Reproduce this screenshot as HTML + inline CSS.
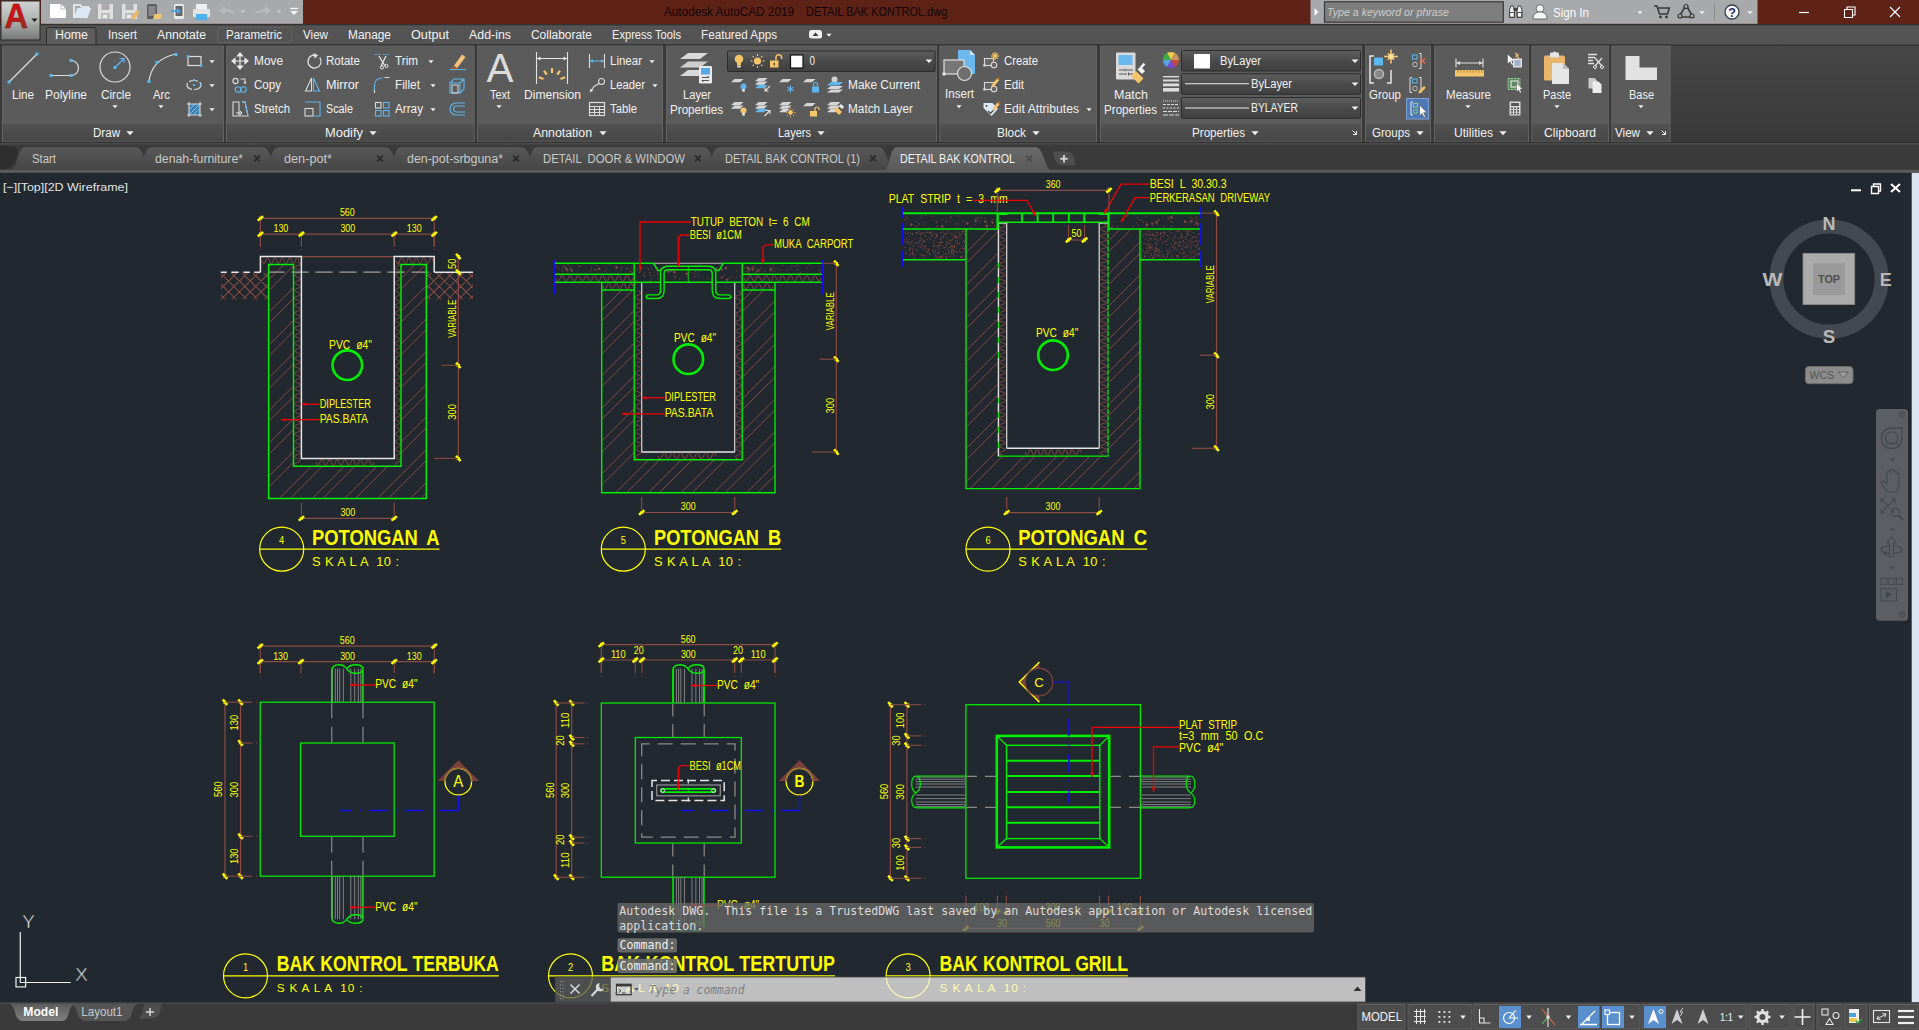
<!DOCTYPE html>
<html lang="en"><head><meta charset="utf-8"><title>Autodesk AutoCAD 2019 - DETAIL BAK KONTROL.dwg</title>
<style>
html,body{margin:0;padding:0;background:#212830;overflow:hidden}
body{width:1919px;height:1030px;position:relative;font-family:"Liberation Sans",sans-serif}
svg{position:absolute;left:0;top:0;display:block}
svg text{white-space:pre}
</style></head><body>
<svg width="1919" height="1030" viewBox="0 0 1919 1030" fill="none" font-family='"Liberation Sans",sans-serif'>
<defs>
<linearGradient id="gAppBtn" x1="0" y1="0" x2="0" y2="1"><stop offset="0" stop-color="#d2d2d2"/><stop offset="0.5" stop-color="#aeb4b0"/><stop offset="1" stop-color="#767676"/></linearGradient>
<linearGradient id="gPanTitle" x1="0" y1="0" x2="0" y2="1"><stop offset="0" stop-color="#515151"/><stop offset="1" stop-color="#474747"/></linearGradient>
<linearGradient id="gCombo" x1="0" y1="0" x2="0" y2="1"><stop offset="0" stop-color="#5f5f5f"/><stop offset="0.5" stop-color="#4a4a4a"/><stop offset="1" stop-color="#404040"/></linearGradient>
<linearGradient id="gRibDark" x1="0" y1="0" x2="0" y2="1"><stop offset="0" stop-color="#474747"/><stop offset="1" stop-color="#383838"/></linearGradient>
<linearGradient id="gModel" x1="0" y1="0" x2="0" y2="1"><stop offset="0" stop-color="#5c5c5c"/><stop offset="1" stop-color="#808080"/></linearGradient>
<linearGradient id="gTab" x1="0" y1="0" x2="0" y2="1"><stop offset="0" stop-color="#585858"/><stop offset="1" stop-color="#464646"/></linearGradient>
<linearGradient id="gTabA" x1="0" y1="0" x2="0" y2="1"><stop offset="0" stop-color="#6a6a6a"/><stop offset="1" stop-color="#5a5a5a"/></linearGradient>
<linearGradient id="gA" x1="0" y1="0" x2="0.3" y2="1"><stop offset="0" stop-color="#d90d12"/><stop offset="0.6" stop-color="#c8141a"/><stop offset="1" stop-color="#8a3423"/></linearGradient>
</defs>
<rect x="0" y="172.6" width="1919" height="830" fill="#212830"/>
<clipPath id="c1"><path d="M268.6 264.5H293.5V466.2H401V264.5H426.3V498.5H268.6Z"/></clipPath><g clip-path="url(#c1)">
<path d="M267 248.75L252.75 263M267 281.5L285.5 263M267 314.25L318.25 263M267 347L351 263M267 379.75L383.75 263M267 412.5L416.5 263M267 445.25L449.25 263M267 478L482 263M267 510.75L514.75 263M267 543.5L547.5 263M267 576.25L580.25 263M267 609L613 263M267 641.75L645.75 263M267 259.55L263.55 263M267 292.3L296.3 263M267 325.05L329.05 263M267 357.8L361.8 263M267 390.55L394.55 263M267 423.3L427.3 263M267 456.05L460.05 263M267 488.8L492.8 263M267 521.55L525.55 263M267 554.3L558.3 263M267 587.05L591.05 263M267 619.8L623.8 263M267 652.55L656.55 263" fill="none" stroke="#8c4b43" stroke-width="0.95"/>
</g>
<clipPath id="c2"><path d="M221 272.6H268.6V299.5H221Z"/></clipPath><g clip-path="url(#c2)">
<path d="M188.5 299.5l26.9 -26.9M199.3 299.5l26.9 -26.9M210.1 299.5l26.9 -26.9M220.9 299.5l26.9 -26.9M231.7 299.5l26.9 -26.9M242.5 299.5l26.9 -26.9M253.3 299.5l26.9 -26.9M264.1 299.5l26.9 -26.9M274.9 299.5l26.9 -26.9M187.8 272.6l26.9 26.9M198.6 272.6l26.9 26.9M209.4 272.6l26.9 26.9M220.2 272.6l26.9 26.9M231 272.6l26.9 26.9M241.8 272.6l26.9 26.9M252.6 272.6l26.9 26.9M263.4 272.6l26.9 26.9M274.2 272.6l26.9 26.9" fill="none" stroke="#8c4b43" stroke-width="1.05"/>
</g>
<clipPath id="c3"><path d="M426.3 272.6H473V299.5H426.3Z"/></clipPath><g clip-path="url(#c3)">
<path d="M393.7 299.5l26.9 -26.9M404.5 299.5l26.9 -26.9M415.3 299.5l26.9 -26.9M426.1 299.5l26.9 -26.9M436.9 299.5l26.9 -26.9M447.7 299.5l26.9 -26.9M458.5 299.5l26.9 -26.9M469.3 299.5l26.9 -26.9M480.1 299.5l26.9 -26.9M393 272.6l26.9 26.9M403.8 272.6l26.9 26.9M414.6 272.6l26.9 26.9M425.4 272.6l26.9 26.9M436.2 272.6l26.9 26.9M447 272.6l26.9 26.9M457.8 272.6l26.9 26.9M468.6 272.6l26.9 26.9M479.4 272.6l26.9 26.9" fill="none" stroke="#8c4b43" stroke-width="1.05"/>
</g>
<path d="M262 260.75q1.85 6.3 3.7 0t3.7 0t3.7 0t3.7 0t3.7 0t3.7 0t3.7 0t3.7 0t3.7 0t3.7 0" fill="none" stroke="#8c4b43" stroke-width="0.9"/>
<path d="M396 260.75q1.85 6.3 3.7 0t3.7 0t3.7 0t3.7 0t3.7 0t3.7 0t3.7 0t3.7 0t3.7 0t3.7 0" fill="none" stroke="#8c4b43" stroke-width="0.9"/>
<path d="M297.5 262q6.2 1.89 0 3.78t0 3.78t0 3.78t0 3.78t0 3.78t0 3.78t0 3.78t0 3.78t0 3.78t0 3.78t0 3.78t0 3.78t0 3.78t0 3.78t0 3.78t0 3.78t0 3.78t0 3.78t0 3.78t0 3.78t0 3.78t0 3.78t0 3.78t0 3.78t0 3.78t0 3.78t0 3.78t0 3.78t0 3.78t0 3.78t0 3.78t0 3.78t0 3.78t0 3.78t0 3.78t0 3.78t0 3.78t0 3.78t0 3.78t0 3.78t0 3.78t0 3.78t0 3.78t0 3.78t0 3.78t0 3.78t0 3.78t0 3.78t0 3.78t0 3.78t0 3.78t0 3.78t0 3.78t0 3.78" fill="none" stroke="#8c4b43" stroke-width="0.9"/>
<path d="M397.6 262q5.2 1.89 0 3.78t0 3.78t0 3.78t0 3.78t0 3.78t0 3.78t0 3.78t0 3.78t0 3.78t0 3.78t0 3.78t0 3.78t0 3.78t0 3.78t0 3.78t0 3.78t0 3.78t0 3.78t0 3.78t0 3.78t0 3.78t0 3.78t0 3.78t0 3.78t0 3.78t0 3.78t0 3.78t0 3.78t0 3.78t0 3.78t0 3.78t0 3.78t0 3.78t0 3.78t0 3.78t0 3.78t0 3.78t0 3.78t0 3.78t0 3.78t0 3.78t0 3.78t0 3.78t0 3.78t0 3.78t0 3.78t0 3.78t0 3.78t0 3.78t0 3.78t0 3.78t0 3.78t0 3.78t0 3.78" fill="none" stroke="#8c4b43" stroke-width="0.9"/>
<path d="M316 462.4q1.93 6 3.87 0t3.87 0t3.87 0t3.87 0t3.87 0t3.87 0t3.87 0t3.87 0t3.87 0t3.87 0t3.87 0t3.87 0t3.87 0t3.87 0t3.87 0" fill="none" stroke="#8c4b43" stroke-width="0.9"/>
<path d="M301.4 256.6L394.2 256.6" stroke="#8c4b43" stroke-width="1.1"/>
<path d="M267.5 272.2L430 272.2" stroke="#a0a0a0" stroke-width="1.3" stroke-dasharray="17 7"/>
<path d="M268.6 264.5H293.5V466.2H401V264.5H426.3V498.5H268.6Z" fill="none" stroke="#00ee00" stroke-width="1.45"/>
<path d="M260.4 272.2V256.5H301.4V458.4H394.2V256.5H434.2V272.2" fill="none" stroke="#e6e6e6" stroke-width="1.5"/>
<path d="M220.8 272.2L260.4 272.2" stroke="#e6e6e6" stroke-width="1.6" stroke-dasharray="6 4.6 7.4 4.6 6.5 4.4 7.5 0"/>
<path d="M434.2 272.2L473 272.2" stroke="#e6e6e6" stroke-width="1.6"/>
<circle cx="347.3" cy="365.2" r="14.8" fill="none" stroke="#00ee00" stroke-width="2.6"/>
<text x="329" y="348.65" font-size="12.99" fill="#ffff00" textLength="43" lengthAdjust="spacingAndGlyphs" word-spacing="4">PVC ø4"</text>
<text x="319.7" y="407.65" font-size="12.99" fill="#ffff00" textLength="51.3" lengthAdjust="spacingAndGlyphs" word-spacing="4">DIPLESTER</text>
<text x="319.7" y="422.65" font-size="12.99" fill="#ffff00" textLength="48.3" lengthAdjust="spacingAndGlyphs" word-spacing="4">PAS.BATA</text>
<path d="M319.7 404.2L301.6 404.2" fill="none" stroke="#f00000" stroke-width="1.3"/>
<path d="M301.6 404.2L306.1 402.5L306.1 405.9Z" fill="#f00000"/>
<path d="M319.7 419.6L281 419.6" fill="none" stroke="#f00000" stroke-width="1.3"/>
<path d="M281 419.6L285.5 417.9L285.5 421.3Z" fill="#f00000"/>
<path d="M260.4 218.4L434.2 218.4" stroke="#8c4b43" stroke-width="1.2"/>
<path d="M260.4 215.4L260.4 246.6" stroke="#8c4b43" stroke-width="1.1"/>
<path d="M257.7 220.6l5.4-4.4" fill="none" stroke="#ffff00" stroke-width="2.5"/>
<path d="M259.2 216.7l2.4 3.4" fill="none" stroke="#ffff00" stroke-width="0.9"/>
<path d="M434.2 215.4L434.2 246.6" stroke="#8c4b43" stroke-width="1.1"/>
<path d="M431.5 220.6l5.4-4.4" fill="none" stroke="#ffff00" stroke-width="2.5"/>
<path d="M433 216.7l2.4 3.4" fill="none" stroke="#ffff00" stroke-width="0.9"/>
<text x="339.9" y="216.2" font-size="10.06" fill="#ffff00" textLength="14.8" lengthAdjust="spacingAndGlyphs">560</text>
<path d="M260.4 234.2L434.2 234.2" stroke="#8c4b43" stroke-width="1.2"/>
<path d="M260.4 231.2L260.4 246.6" stroke="#8c4b43" stroke-width="1.1"/>
<path d="M257.7 236.4l5.4-4.4" fill="none" stroke="#ffff00" stroke-width="2.5"/>
<path d="M259.2 232.5l2.4 3.4" fill="none" stroke="#ffff00" stroke-width="0.9"/>
<path d="M301.4 231.2L301.4 246.6" stroke="#8c4b43" stroke-width="1.1"/>
<path d="M298.7 236.4l5.4-4.4" fill="none" stroke="#ffff00" stroke-width="2.5"/>
<path d="M300.2 232.5l2.4 3.4" fill="none" stroke="#ffff00" stroke-width="0.9"/>
<path d="M394.2 231.2L394.2 246.6" stroke="#8c4b43" stroke-width="1.1"/>
<path d="M391.5 236.4l5.4-4.4" fill="none" stroke="#ffff00" stroke-width="2.5"/>
<path d="M393 232.5l2.4 3.4" fill="none" stroke="#ffff00" stroke-width="0.9"/>
<path d="M434.2 231.2L434.2 246.6" stroke="#8c4b43" stroke-width="1.1"/>
<path d="M431.5 236.4l5.4-4.4" fill="none" stroke="#ffff00" stroke-width="2.5"/>
<path d="M433 232.5l2.4 3.4" fill="none" stroke="#ffff00" stroke-width="0.9"/>
<text x="273.5" y="232" font-size="10.06" fill="#ffff00" textLength="14.8" lengthAdjust="spacingAndGlyphs">130</text>
<text x="340.4" y="232" font-size="10.06" fill="#ffff00" textLength="14.8" lengthAdjust="spacingAndGlyphs">300</text>
<text x="406.8" y="232" font-size="10.06" fill="#ffff00" textLength="14.8" lengthAdjust="spacingAndGlyphs">130</text>
<rect x="259.9" y="249" width="1" height="1" fill="#8c4b43"/>
<rect x="300.9" y="249" width="1" height="1" fill="#8c4b43"/>
<rect x="393.7" y="249" width="1" height="1" fill="#8c4b43"/>
<rect x="433.7" y="249" width="1" height="1" fill="#8c4b43"/>
<path d="M458.3 256.4L458.3 458.4" stroke="#8c4b43" stroke-width="1.2"/>
<path d="M456.1 253.7l4.4 5.4" fill="none" stroke="#ffff00" stroke-width="2.5"/>
<path d="M456.6 257.6l3.4-2.4" fill="none" stroke="#ffff00" stroke-width="0.9"/>
<path d="M456.1 269.5l4.4 5.4" fill="none" stroke="#ffff00" stroke-width="2.5"/>
<path d="M456.6 273.4l3.4-2.4" fill="none" stroke="#ffff00" stroke-width="0.9"/>
<path d="M456.1 362.6l4.4 5.4" fill="none" stroke="#ffff00" stroke-width="2.5"/>
<path d="M456.6 366.5l3.4-2.4" fill="none" stroke="#ffff00" stroke-width="0.9"/>
<path d="M456.1 455.7l4.4 5.4" fill="none" stroke="#ffff00" stroke-width="2.5"/>
<path d="M456.6 459.6l3.4-2.4" fill="none" stroke="#ffff00" stroke-width="0.9"/>
<text x="0" y="0" font-size="10.06" fill="#ffff00" textLength="38" lengthAdjust="spacingAndGlyphs" transform="translate(455.8 337.75) rotate(-90)">VARIABLE</text>
<text x="0" y="0" font-size="10.06" fill="#ffff00" textLength="15.7" lengthAdjust="spacingAndGlyphs" transform="translate(455.8 419.7) rotate(-90)">300</text>
<text x="0" y="0" font-size="10.06" fill="#ffff00" textLength="10.5" lengthAdjust="spacingAndGlyphs" transform="translate(456.2 269.05) rotate(-90)">50</text>
<path d="M441.7 365.3L458 365.3" stroke="#8c4b43" stroke-width="1.1"/>
<path d="M434 458.4L458 458.4" stroke="#8c4b43" stroke-width="1.1"/>
<path d="M301.4 518.4L394.2 518.4" stroke="#8c4b43" stroke-width="1.2"/>
<path d="M301.4 503L301.4 515.4" stroke="#8c4b43" stroke-width="1.1"/>
<path d="M298.7 520.6l5.4-4.4" fill="none" stroke="#ffff00" stroke-width="2.5"/>
<path d="M300.2 516.7l2.4 3.4" fill="none" stroke="#ffff00" stroke-width="0.9"/>
<path d="M394.2 503L394.2 515.4" stroke="#8c4b43" stroke-width="1.1"/>
<path d="M391.5 520.6l5.4-4.4" fill="none" stroke="#ffff00" stroke-width="2.5"/>
<path d="M393 516.7l2.4 3.4" fill="none" stroke="#ffff00" stroke-width="0.9"/>
<text x="340.4" y="516.2" font-size="10.06" fill="#ffff00" textLength="14.8" lengthAdjust="spacingAndGlyphs">300</text>
<circle cx="281.7" cy="549.2" r="22" fill="none" stroke="#ffff00" stroke-width="1.2"/>
<path d="M259.7 549.2L439.5 549.2" stroke="#ffff00" stroke-width="1.3"/>
<text x="279.1" y="544.4" font-size="10.61" fill="#ffff00" textLength="5.2" lengthAdjust="spacingAndGlyphs">4</text>
<text x="312" y="544.8" font-size="22.63" fill="#ffff00" textLength="127.5" lengthAdjust="spacingAndGlyphs" font-weight="bold" word-spacing="5">POTONGAN A</text>
<text x="312" y="566" font-size="12.85" fill="#ffff00" textLength="87" lengthAdjust="spacing" xml:space="preserve">S K A L A  10 :</text>
<clipPath id="c4"><path d="M601.7 290H634.2V459.7H742.2V290H775V492.2H601.7Z"/></clipPath><g clip-path="url(#c4)">
<path d="M600 279.15L591.15 288M600 311.9L623.9 288M600 344.65L656.65 288M600 377.4L689.4 288M600 410.15L722.15 288M600 442.9L754.9 288M600 475.65L787.65 288M600 508.4L820.4 288M600 541.15L853.15 288M600 573.9L885.9 288M600 606.65L918.65 288M600 639.4L951.4 288M600 257.4L569.4 288M600 290.15L602.15 288M600 322.9L634.9 288M600 355.65L667.65 288M600 388.4L700.4 288M600 421.15L733.15 288M600 453.9L765.9 288M600 486.65L798.65 288M600 519.4L831.4 288M600 552.15L864.15 288M600 584.9L896.9 288M600 617.65L929.65 288M600 650.4L962.4 288" fill="none" stroke="#8c4b43" stroke-width="0.95"/>
</g>
<path d="M590.56 269.23h1M627.13 268.47h1M594.86 269.46h1M569.81 268.85h1M604.32 271.12h1M562.79 267.16h1M562.53 271.26h1M609.24 265.04h1M631.62 272.51h1M606.18 269.69h1M567.71 264.82h1M596.45 265.18h1M570.24 266.66h1M557.83 268.46h1M589.64 271.52h1M595.73 269.89h1M594.23 270.07h1M590.94 266.95h1M632.82 272.77h1M620.62 270.43h1M579.93 266.56h1M577.9 265.27h1M614.89 267.94h1M621.11 267.83h1M629.75 271.56h1M555.54 266.4h1M626.05 268.51h1M631.48 267.92h1M561.16 269.8h1M615.83 266.89h1M562.25 267.39h1M630.22 270.84h1M564.64 266.7h1M563.33 265.19h1" fill="none" stroke="#8c4b43" stroke-width="1"/>
<path d="M615.88 266.48l2 .6-1.2 1.6zM598.17 267.96l2 .6-1.2 1.6zM570.71 269.53l2 .6-1.2 1.6zM566.26 269.04l2 .6-1.2 1.6zM565.18 267.81l2 .6-1.2 1.6z" fill="#8c4b43" stroke="#8c4b43" stroke-width="0.8"/>
<path d="M780.02 270.03h1M794.98 265.86h1M743.85 267.74h1M764.38 271.26h1M796.87 269.57h1M786.54 270.06h1M754.33 268.26h1M755.66 272.04h1M747.59 271.33h1M748.82 270.26h1M769.29 267.98h1M808.71 264.85h1M747.74 272.11h1M782.7 265.44h1M820 272.37h1M751.78 268.13h1M753.54 267.23h1M791.47 266.02h1M797.35 265.12h1M756.35 271.31h1M774.24 268.09h1M789.49 268.56h1M773 264.95h1M799.65 272.54h1M819.15 270.08h1M770.79 267.64h1M796.83 270.16h1M751.88 266.6h1M771.34 268.84h1M806.19 268.75h1M745.2 271.36h1M776.55 268.9h1M760.33 268.16h1M773.28 270.95h1" fill="none" stroke="#8c4b43" stroke-width="1"/>
<path d="M751.7 268.52l2 .6-1.2 1.6zM757.35 269.33l2 .6-1.2 1.6zM746.76 267.02l2 .6-1.2 1.6zM769.81 269l2 .6-1.2 1.6zM747.9 268.03l2 .6-1.2 1.6z" fill="#8c4b43" stroke="#8c4b43" stroke-width="0.8"/>
<path d="M662.83 275.73h1M707.67 278.37h1M655.09 268.41h1M651.03 268.33h1M712.94 266.8h1M691.55 268.14h1M666.59 271.65h1M723.87 274.5h1M637.02 269.14h1M650.98 278.73h1M720.93 277.68h1M722.68 276.69h1M735.65 277.48h1M662.58 278.38h1M686.86 276.86h1M695.02 271.62h1M673.92 271.62h1M668.6 266.59h1M721.97 277.55h1M739.49 275.82h1M693.97 276.75h1M649.73 275.6h1M682.28 267.54h1M656.88 273.12h1M662.22 272.1h1M699.38 271.07h1M649.3 272.6h1M660.34 268.49h1M656.02 270.6h1M643.23 275.18h1M736.11 270.97h1M711.34 279.72h1M640.06 266.98h1M720.54 278.19h1M702.92 267.27h1M679.12 278.68h1M728.99 277.63h1M656.92 278.44h1M675.04 276.24h1M649.95 280.34h1M699.17 276.34h1M657.84 274.64h1M696.78 274.22h1M673.41 276.42h1M671.51 269.45h1M652.85 275.71h1M647.34 268.33h1M642.79 275.06h1M694.17 273.45h1M639.6 271.78h1M671.69 266.19h1M635.81 280.77h1M648.32 269.55h1M663.87 274.32h1M643.67 272.27h1M674.19 278.14h1M636.1 270.09h1M687.89 280.31h1M690.01 272.33h1M706.13 269.47h1M638.85 272.77h1M731.55 276.59h1M662.75 275.71h1M725.08 268.86h1M697.54 270.42h1M661.27 269.33h1M657.01 270.35h1M639.52 271.1h1M644.65 276.91h1M698.78 264.77h1" fill="none" stroke="#8c4b43" stroke-width="1"/>
<path d="M715.82 268.07l2 .6-1.2 1.6zM685.78 272.99l2 .6-1.2 1.6zM670.62 269.41l2 .6-1.2 1.6zM681.08 267.35l2 .6-1.2 1.6zM725.02 267.01l2 .6-1.2 1.6zM720.91 268.45l2 .6-1.2 1.6zM667.59 270.74l2 .6-1.2 1.6zM639.92 267.23l2 .6-1.2 1.6zM673.51 271.47l2 .6-1.2 1.6zM726.34 278.86l2 .6-1.2 1.6z" fill="#8c4b43" stroke="#8c4b43" stroke-width="0.8"/>
<path d="M556 278.3q2.03 6.2 4.05 0t4.05 0t4.05 0t4.05 0t4.05 0t4.05 0t4.05 0t4.05 0t4.05 0t4.05 0t4.05 0t4.05 0t4.05 0t4.05 0t4.05 0t4.05 0t4.05 0t4.05 0t4.05 0" fill="none" stroke="#8c4b43" stroke-width="0.9"/>
<path d="M744 278.3q2.03 6.2 4.05 0t4.05 0t4.05 0t4.05 0t4.05 0t4.05 0t4.05 0t4.05 0t4.05 0t4.05 0t4.05 0t4.05 0t4.05 0t4.05 0t4.05 0t4.05 0t4.05 0t4.05 0t4.05 0" fill="none" stroke="#8c4b43" stroke-width="0.9"/>
<path d="M603 286.2q1.88 6 3.75 0t3.75 0t3.75 0t3.75 0t3.75 0t3.75 0t3.75 0t3.75 0" fill="none" stroke="#8c4b43" stroke-width="0.9"/>
<path d="M744 286.2q2.07 6 4.14 0t4.14 0t4.14 0t4.14 0t4.14 0t4.14 0t4.14 0" fill="none" stroke="#8c4b43" stroke-width="0.9"/>
<path d="M641.7 283V452M734.7 452V283" fill="none" stroke="#d0d0d0" stroke-width="1.25"/>
<path d="M641.7 452L734.7 452" stroke="#e6e6e6" stroke-width="1.5"/>
<path d="M653.3 263.3L723 263.3" stroke="#bdbdbd" stroke-width="1.1"/>
<path d="M638.1 291q5.8 2.1 0 4.2t0 4.2t0 4.2t0 4.2t0 4.2t0 4.2t0 4.2t0 4.2t0 4.2t0 4.2t0 4.2t0 4.2t0 4.2t0 4.2t0 4.2t0 4.2t0 4.2t0 4.2t0 4.2t0 4.2t0 4.2t0 4.2t0 4.2t0 4.2t0 4.2t0 4.2t0 4.2t0 4.2t0 4.2t0 4.2t0 4.2t0 4.2t0 4.2t0 4.2t0 4.2t0 4.2t0 4.2t0 4.2t0 4.2t0 4.2" fill="none" stroke="#8c4b43" stroke-width="0.9"/>
<path d="M738.45 291q5.9 2.1 0 4.2t0 4.2t0 4.2t0 4.2t0 4.2t0 4.2t0 4.2t0 4.2t0 4.2t0 4.2t0 4.2t0 4.2t0 4.2t0 4.2t0 4.2t0 4.2t0 4.2t0 4.2t0 4.2t0 4.2t0 4.2t0 4.2t0 4.2t0 4.2t0 4.2t0 4.2t0 4.2t0 4.2t0 4.2t0 4.2t0 4.2t0 4.2t0 4.2t0 4.2t0 4.2t0 4.2t0 4.2t0 4.2t0 4.2t0 4.2" fill="none" stroke="#8c4b43" stroke-width="0.9"/>
<path d="M658 455.95q2.07 5.9 4.14 0t4.14 0t4.14 0t4.14 0t4.14 0t4.14 0t4.14 0t4.14 0t4.14 0t4.14 0t4.14 0t4.14 0t4.14 0t4.14 0" fill="none" stroke="#8c4b43" stroke-width="0.9"/>
<path d="M554.2 263.3H653.3L658.3 270.6H662M715 270.6H719L723 263.3H822.5" fill="none" stroke="#00ee00" stroke-width="1.5"/>
<path d="M554.2 274.2H634.2M742.2 274.2H822.5M554.2 282.2H742.2M742.2 282.2H822.5M601.7 290H634.2M742.2 290H775" fill="none" stroke="#00ee00" stroke-width="1.4"/>
<path d="M634.2 263.3V459.7H742.2V263.3" fill="none" stroke="#00ee00" stroke-width="1.4"/>
<path d="M601.7 282.2V492.7H775V282.2" fill="none" stroke="#00ee00" stroke-width="1.4"/>
<path d="M648 296.7H656.5Q662.3 296.7 662.3 290.5V273.5Q662.3 268 668 268H708.5Q714 268 714 273.5V290.5Q714 296.7 720 296.7H728.7" fill="none" stroke="#00ee00" stroke-width="5" stroke-linecap="round"/>
<path d="M648 296.7H656.5Q662.3 296.7 662.3 290.5V273.5Q662.3 268 668 268H708.5Q714 268 714 273.5V290.5Q714 296.7 720 296.7H728.7" fill="none" stroke="#212830" stroke-width="2.2" stroke-linecap="round"/>
<path d="M688.3 266L688.3 283" stroke="#00ee00" stroke-width="0.8"/>
<path d="M554.2 260L554.2 294.5" stroke="#1010f0" stroke-width="1.6"/>
<path d="M822.5 260L822.5 294.5" stroke="#1010f0" stroke-width="1.6"/>
<circle cx="688.3" cy="359.2" r="14.8" fill="none" stroke="#00ee00" stroke-width="2.6"/>
<text x="674" y="342.15" font-size="12.99" fill="#ffff00" textLength="42" lengthAdjust="spacingAndGlyphs" word-spacing="4">PVC ø4"</text>
<text x="664.7" y="401.35" font-size="12.99" fill="#ffff00" textLength="51.1" lengthAdjust="spacingAndGlyphs" word-spacing="4">DIPLESTER</text>
<text x="664.7" y="417.45" font-size="12.99" fill="#ffff00" textLength="48.6" lengthAdjust="spacingAndGlyphs" word-spacing="4">PAS.BATA</text>
<path d="M664.7 397.8L641.9 397.8" fill="none" stroke="#f00000" stroke-width="1.3"/>
<path d="M641.9 397.8L646.4 396.1L646.4 399.5Z" fill="#f00000"/>
<path d="M664.7 413.8L621.7 413.8" fill="none" stroke="#f00000" stroke-width="1.3"/>
<path d="M621.7 413.8L626.2 412.1L626.2 415.5Z" fill="#f00000"/>
<text x="690.8" y="225.95" font-size="12.99" fill="#ffff00" textLength="118.9" lengthAdjust="spacingAndGlyphs" word-spacing="4">TUTUP BETON t= 6 CM</text>
<text x="689.7" y="239.15" font-size="12.99" fill="#ffff00" textLength="52" lengthAdjust="spacingAndGlyphs" word-spacing="4">BESI ø1CM</text>
<text x="774" y="248.35" font-size="12.99" fill="#ffff00" textLength="79.3" lengthAdjust="spacingAndGlyphs" word-spacing="4">MUKA CARPORT</text>
<path d="M690.8 222L640 222L640 270" fill="none" stroke="#f00000" stroke-width="1.3"/>
<path d="M640 270L638.3 265.5L641.7 265.5Z" fill="#f00000"/>
<path d="M689.7 235L681 235L678.3 237.5L678.3 266.5" fill="none" stroke="#f00000" stroke-width="1.3"/>
<path d="M678.3 266.5L676.6 262L680 262Z" fill="#f00000"/>
<path d="M774 244.8L765.5 244.8L763 247L763 263.5" fill="none" stroke="#f00000" stroke-width="1.3"/>
<path d="M763 263.5L761.3 259L764.7 259Z" fill="#f00000"/>
<path d="M836.3 263.3L836.3 452" stroke="#8c4b43" stroke-width="1.2"/>
<path d="M834.1 260.6l4.4 5.4" fill="none" stroke="#ffff00" stroke-width="2.5"/>
<path d="M834.6 264.5l3.4-2.4" fill="none" stroke="#ffff00" stroke-width="0.9"/>
<path d="M834.1 356.5l4.4 5.4" fill="none" stroke="#ffff00" stroke-width="2.5"/>
<path d="M834.6 360.4l3.4-2.4" fill="none" stroke="#ffff00" stroke-width="0.9"/>
<path d="M834.1 449.3l4.4 5.4" fill="none" stroke="#ffff00" stroke-width="2.5"/>
<path d="M834.6 453.2l3.4-2.4" fill="none" stroke="#ffff00" stroke-width="0.9"/>
<text x="0" y="0" font-size="10.06" fill="#ffff00" textLength="38" lengthAdjust="spacingAndGlyphs" transform="translate(833.6 330.25) rotate(-90)">VARIABLE</text>
<text x="0" y="0" font-size="10.06" fill="#ffff00" textLength="15.7" lengthAdjust="spacingAndGlyphs" transform="translate(833.6 413.45) rotate(-90)">300</text>
<path d="M822.5 263.3L836 263.3" stroke="#8c4b43" stroke-width="1.1"/>
<path d="M819.5 359.2L836 359.2" stroke="#8c4b43" stroke-width="1.1"/>
<path d="M812 452L836 452" stroke="#8c4b43" stroke-width="1.1"/>
<path d="M641.7 512.5L734.7 512.5" stroke="#8c4b43" stroke-width="1.2"/>
<path d="M641.7 497L641.7 509.5" stroke="#8c4b43" stroke-width="1.1"/>
<path d="M639 514.7l5.4-4.4" fill="none" stroke="#ffff00" stroke-width="2.5"/>
<path d="M640.5 510.8l2.4 3.4" fill="none" stroke="#ffff00" stroke-width="0.9"/>
<path d="M734.7 497L734.7 509.5" stroke="#8c4b43" stroke-width="1.1"/>
<path d="M732 514.7l5.4-4.4" fill="none" stroke="#ffff00" stroke-width="2.5"/>
<path d="M733.5 510.8l2.4 3.4" fill="none" stroke="#ffff00" stroke-width="0.9"/>
<text x="680.8" y="510.3" font-size="10.06" fill="#ffff00" textLength="14.8" lengthAdjust="spacingAndGlyphs">300</text>
<circle cx="623.3" cy="549.2" r="22" fill="none" stroke="#ffff00" stroke-width="1.2"/>
<path d="M601.3 549.2L781.3 549.2" stroke="#ffff00" stroke-width="1.3"/>
<text x="620.7" y="544.4" font-size="10.61" fill="#ffff00" textLength="5.2" lengthAdjust="spacingAndGlyphs">5</text>
<text x="654" y="544.8" font-size="22.63" fill="#ffff00" textLength="127.3" lengthAdjust="spacingAndGlyphs" font-weight="bold" word-spacing="5">POTONGAN B</text>
<text x="654" y="566" font-size="12.85" fill="#ffff00" textLength="87" lengthAdjust="spacing" xml:space="preserve">S K A L A  10 :</text>
<clipPath id="c5"><path d="M966 228.9H998V456.2H1108V228.9H1140V488.6H966Z"/></clipPath><g clip-path="url(#c5)">
<path d="M964 221.75L958.75 227M964 254.5L991.5 227M964 287.25L1024.25 227M964 320L1057 227M964 352.75L1089.75 227M964 385.5L1122.5 227M964 418.25L1155.25 227M964 451L1188 227M964 483.75L1220.75 227M964 516.5L1253.5 227M964 549.25L1286.25 227M964 582L1319 227M964 614.75L1351.75 227M964 647.5L1384.5 227M964 199.95L936.95 227M964 232.7L969.7 227M964 265.45L1002.45 227M964 298.2L1035.2 227M964 330.95L1067.95 227M964 363.7L1100.7 227M964 396.45L1133.45 227M964 429.2L1166.2 227M964 461.95L1198.95 227M964 494.7L1231.7 227M964 527.45L1264.45 227M964 560.2L1297.2 227M964 592.95L1329.95 227M964 625.7L1362.7 227M964 658.45L1395.45 227" fill="none" stroke="#8c4b43" stroke-width="0.95"/>
</g>
<path d="M918.92 223.55h1M962.87 221h1M923.7 224.79h1M979.03 221.4h1M950.73 218.06h1M903.8 219.69h1M958.23 216.04h1M977.72 218.01h1M925.26 215.71h1M996.77 224.14h1M985.32 222.65h1M906.69 219.18h1M950.02 216.6h1M992.51 219.66h1M917.98 225.09h1M915.18 226.43h1M945.87 221.88h1M935.56 221.06h1M920.98 215.65h1M984.46 218.04h1M976.45 217.72h1M994.08 226.02h1M974.07 224.43h1M957.8 224.03h1M914.95 220.96h1M980.83 217.63h1M989.82 225.94h1M941.8 219.62h1M945.7 219.87h1M996.52 219.88h1M906.01 216.33h1M970.64 227.21h1M949.88 221.15h1M954.97 224.25h1M924.26 222.57h1M955.53 222.73h1M920.39 217.26h1M936.06 226.42h1M935.91 222.43h1M932.17 216.45h1" fill="none" stroke="#8c4b43" stroke-width="1"/>
<path d="M910.44 223.73l2 .6-1.2 1.6zM974.82 219.56l2 .6-1.2 1.6zM966.34 222.42l2 .6-1.2 1.6zM985.83 225.1l2 .6-1.2 1.6zM941.33 225.4l2 .6-1.2 1.6zM991.51 221.61l2 .6-1.2 1.6zM984.43 220.66l2 .6-1.2 1.6z" fill="#8c4b43" stroke="#8c4b43" stroke-width="0.8"/>
<path d="M1195.72 216.9h1M1111.14 227.28h1M1125.67 216.66h1M1167.95 219.38h1M1189.5 218h1M1195.83 219.07h1M1163.4 226.48h1M1171.02 226.38h1M1173.08 215.79h1M1188.76 222.33h1M1137.12 217.5h1M1185.91 222.25h1M1193.89 224.56h1M1195.99 222.05h1M1172.2 222.61h1M1132.39 226.78h1M1137.28 224.65h1M1195.39 223.08h1M1121.87 225.19h1M1169.41 217.44h1M1113.45 221.63h1M1111.92 226.39h1M1154.82 221.46h1M1146.05 223.2h1M1191.94 218.92h1M1142.83 222.25h1M1135.91 222.41h1M1158.15 220.45h1M1169.93 221.59h1M1116.97 227.26h1M1141.19 220.42h1M1145.45 226.45h1M1195.17 221.4h1M1145.26 216.37h1M1190.04 217.27h1M1158.47 219.42h1M1138.71 219.52h1M1126.31 215.65h1M1157.46 224.83h1M1167.56 217.64h1" fill="none" stroke="#8c4b43" stroke-width="1"/>
<path d="M1170.69 216.49l2 .6-1.2 1.6zM1145.94 223.87l2 .6-1.2 1.6zM1190.59 220.38l2 .6-1.2 1.6zM1184.07 220.74l2 .6-1.2 1.6zM1155.85 221.55l2 .6-1.2 1.6zM1196.74 223.06l2 .6-1.2 1.6zM1151.39 222.91l2 .6-1.2 1.6z" fill="#8c4b43" stroke="#8c4b43" stroke-width="0.8"/>
<path d="M960.38 256.88h1M958.38 233.01h1M939.91 242.4h1M936.1 234.3h1M915.31 242.97h1M917.09 243.26h1M905.02 233.07h1M947.17 242.33h1M935.03 250.96h1M925.58 232.29h1M951.66 246.96h1M943.96 247.84h1M963.2 240.71h1M950.23 240.88h1M938.68 248.93h1M922.84 233.07h1M932.66 250.51h1M939.82 243.05h1M943.01 235.72h1M914.48 239.63h1M953.68 236.1h1M910.53 233.42h1M905.89 238.31h1M938.73 253.35h1M923.84 240.9h1M921.24 239.11h1M951.32 245.85h1M919.39 233.66h1M951.7 250.22h1M954.46 237.27h1M937.05 256.06h1M939.95 256.79h1M913.79 257.61h1M906.94 242.19h1M904.94 253.04h1M945.76 257.58h1M953.01 256.89h1M936.62 257.97h1M949.56 240.25h1M963.43 241.11h1M915.39 232.79h1M932.16 236.13h1M960.92 256.93h1M916.78 233.56h1M936.03 235.38h1M936.93 253.13h1M919.06 242.34h1M958.9 242.97h1M924.58 255.33h1M953.55 255.41h1M945.8 242.09h1M946.12 253.6h1M942.83 237.28h1M921.66 242.01h1M950.96 246.08h1M937.32 253.51h1M910.17 248.12h1M923.95 246.14h1M954.87 237.55h1M962.02 232.87h1M938.06 245.65h1M917.96 246.18h1M932.45 243.11h1M947.68 230.81h1M926.7 252.38h1M912.22 254.64h1M916.02 249.5h1M914.15 243.1h1M929.49 232.96h1M946.53 243.95h1M945.87 245.58h1M937.69 245.22h1M921.81 255.51h1M908.81 254.89h1M956.6 244.44h1M951.28 249.28h1M940.71 238.75h1M923.16 240.34h1M922.08 257.19h1M924.49 241.4h1M929.3 253.24h1M932.88 245.98h1M919.21 238.37h1M908.98 236.7h1M919.73 254.22h1M934.4 233.75h1M931.96 234.04h1M938.31 242.9h1M956.28 237.86h1M955.83 237.53h1M963.93 248.2h1M906.12 252.98h1M920.45 240.7h1M912.51 253.81h1M909.06 251.08h1M927.84 249.45h1M921.52 232.86h1M959.78 248.77h1M913.94 257.64h1M959.58 235.74h1M904.67 247.56h1M912.06 250.9h1M932.34 250.27h1M938.54 251.97h1M954.03 247.34h1M939.87 239.72h1M911.75 233.25h1M956.2 236.39h1M929.73 239.44h1M941.61 245.42h1M956.33 242.73h1M925.76 248.67h1M949.31 256.24h1M922.68 255.17h1M963.86 257.81h1M911.45 241.19h1M951.1 253.64h1M905.93 241.6h1M948.04 251.63h1M936.41 236.51h1M928.52 232.32h1M922.91 242.5h1M954.11 246.97h1M928.98 237.49h1M922.89 249.21h1M930.9 235.48h1M954.04 246.59h1M963 245.5h1M941.82 242.5h1M940.91 256.06h1M963.85 248.94h1M929.96 232.43h1M955.17 241.5h1M927.02 232.28h1M905.6 241.48h1M963.45 251.14h1M947.09 249.15h1M920.28 235.35h1M940.54 232.45h1M939.67 244.9h1M936.86 234.05h1M907.66 243.76h1M912.45 248.4h1M922.54 247.83h1M949.64 247.44h1M936.19 236.15h1M924.85 257.69h1M920.02 238.55h1M933.84 245.77h1M952.13 238.85h1M962.71 231.31h1M952.11 246.42h1M958.92 234.92h1M945.89 256.84h1M944.52 233.8h1M960.14 257.46h1M910.31 253.53h1M908.38 232.94h1M952.42 250.57h1M962.37 248.14h1M934.97 238.21h1M938.73 258.09h1M943.27 254.87h1M915.64 250.99h1M948.5 232.66h1M953.94 235.56h1M916.87 232.39h1M944.25 234.63h1M963.51 230.7h1M953.28 251.65h1M938.51 246.49h1M952.58 248.26h1M912.07 252.69h1M925.26 246.81h1M935.01 255.65h1M928.98 254.25h1M908.53 239.7h1M944.74 247.59h1M954.69 236.44h1M952.96 252.66h1M912.29 234.56h1M939.37 257.63h1M941.24 242.51h1M934.67 253.04h1M935.62 245.51h1M939.99 256.43h1M952.72 253.86h1M919.87 247.26h1M954.12 250.52h1M962.04 255.96h1M911.35 244.73h1M925.5 236.36h1M934.3 257.85h1M950.75 233.44h1M918.74 240.9h1M957.94 243.38h1M913.31 245.89h1M918.7 231.76h1M939.95 258.05h1M951.22 251.02h1M912.89 246.2h1M942.67 251.65h1M930.97 232.17h1M960.55 238.03h1M948.91 243.51h1M951.42 240.02h1M909.19 242.51h1M933.02 252.57h1M928.33 249.09h1M926.64 250.92h1M914.21 254.99h1M961.58 231.35h1M956.29 252.17h1M946.12 233.62h1M948.57 252h1M942.02 257.3h1M961.74 248.19h1M960.39 234.67h1M921.85 245.32h1M935.64 257h1M942.61 247.85h1M941.71 256.8h1M928.13 251.11h1M940.41 241.81h1M924.35 234.94h1M904.17 239.97h1M921.96 232.94h1M933.36 240.38h1M960.45 252.24h1M944.4 254.08h1M920.39 233.91h1M941 236.98h1M964.08 242.43h1M958 237.48h1M909.26 248.01h1M946.11 237.77h1M960.5 257.56h1M945.77 257.79h1M963.96 234.79h1M948.42 251.29h1M948.51 240.07h1M936.91 246.93h1M955.77 232.12h1M926.58 239.39h1M952.18 233.92h1M907.29 233.89h1M910.64 242.71h1M956.74 240.5h1M909.72 249.19h1M923.96 246.46h1M949.48 243.28h1M948.6 247.8h1M955.88 251.74h1M958.92 251.3h1M920.86 244.63h1M950.99 252.36h1M948.42 253.97h1M954.21 245.63h1M942.89 231.91h1M932.86 250.76h1" fill="none" stroke="#8c4b43" stroke-width="1"/>
<path d="M1182.67 253.88h1M1151.68 258.25h1M1152.35 249.22h1M1146.37 251.61h1M1149.85 250.2h1M1183.38 251.84h1M1166.82 254.6h1M1198.79 233.89h1M1171.24 257.15h1M1184.24 242.96h1M1158.82 257h1M1145.98 251.69h1M1190.33 235.05h1M1160.12 239.13h1M1172.71 240.83h1M1193.28 256.22h1M1159.5 255.4h1M1145.07 233.37h1M1179.91 252.75h1M1188.92 258.08h1M1191.29 238.05h1M1184.45 256.22h1M1146.48 244.35h1M1150.03 234.65h1M1169.05 249.2h1M1197.96 234.33h1M1170.57 258.23h1M1185.75 245.39h1M1155.19 248.11h1M1156.27 248.47h1M1178.95 241.5h1M1187.49 241.84h1M1168.43 253.65h1M1155.66 235.82h1M1174.6 242.69h1M1192.14 237.57h1M1162.72 232.29h1M1167.38 239.33h1M1167.25 251.79h1M1143.19 258h1M1182.62 253.09h1M1172.52 246.61h1M1164.96 241.63h1M1153.92 239.06h1M1158.19 239.98h1M1194.07 252.74h1M1178.51 231.17h1M1156.35 245.69h1M1181.49 242.27h1M1178.01 255.68h1M1156.65 241.24h1M1185.47 239.49h1M1183.2 241.66h1M1142.13 243.47h1M1144.98 252.36h1M1190.43 245.32h1M1193.61 236.58h1M1167.07 235.55h1M1143.85 253.46h1M1144.05 256.49h1M1173.57 250.04h1M1143.9 255.74h1M1187.44 233.57h1M1151.7 234.59h1M1170.49 232.87h1M1187.71 244.4h1M1182.19 237.73h1M1179.26 243.22h1M1178.93 242.04h1M1198.9 254.06h1M1189.71 240.12h1M1152.18 234.93h1M1148.7 257.4h1M1157.51 254.73h1M1154.58 247.8h1M1155.58 239.18h1M1184.73 247.49h1M1196.33 237.25h1M1156.82 232.43h1M1153.52 257.77h1M1173.98 243.82h1M1160.94 251.67h1M1181.32 235h1M1143.71 235.49h1M1188.8 250.93h1M1154.25 237.16h1M1158.98 249.45h1M1184.78 237.28h1M1160.25 237.25h1M1196.32 245.93h1M1195.97 237.38h1M1178.01 246.4h1M1195.52 240.76h1M1154.37 253.27h1M1196.73 244.74h1M1160.46 233.05h1M1166.99 256.23h1M1161.9 243.08h1M1174.01 237.26h1M1147.35 245.03h1M1197.59 254.77h1M1158.67 252.35h1M1189.67 246.8h1M1162.03 236.11h1M1182.16 249.64h1M1153.5 234.6h1M1147.67 253.56h1M1192.8 244.96h1M1176.74 250.22h1M1150.18 245.04h1M1167.22 254.7h1M1150.59 254.08h1M1149.32 247.55h1M1193.16 232.8h1M1169.29 230.82h1M1170.79 244.1h1M1197.14 244.12h1M1194.21 250.83h1M1190.24 240.37h1M1146.6 248.29h1M1147.57 247.98h1M1151.49 247.38h1M1185.83 257.24h1M1152.77 235.52h1M1165.62 257.58h1M1155.89 243.81h1M1163.31 232.41h1M1172.56 239.17h1M1168.5 251.1h1M1180.03 237.46h1M1178.88 245.51h1M1185.74 230.79h1M1157.44 249.27h1M1173.61 244.62h1M1171.96 247.74h1M1184.05 253.74h1M1186.53 255.72h1M1174.67 235.43h1M1162.62 254.49h1M1186.17 247.8h1M1148.46 235.13h1M1179.37 242.35h1M1151.99 257.48h1M1154.53 256.27h1M1177.36 257.06h1M1186.34 236.25h1M1154.32 254.52h1M1166.4 244.6h1M1184.72 247.34h1M1183.08 245.09h1M1157.12 250.62h1M1148.39 250.68h1M1187.57 234.62h1M1141.14 255.93h1M1151.91 245.41h1M1157.96 234.48h1M1156.1 232.73h1M1190.52 251.94h1M1186.84 234.76h1M1159.93 233.39h1M1190.67 257.62h1M1196.49 253.97h1M1176.87 244.43h1M1147.71 231.6h1M1177.22 257.25h1M1198.39 242.22h1M1171.52 255.02h1M1157.54 250.95h1M1176.1 242.67h1M1163.79 235.08h1M1149.56 238.91h1M1198.83 253.3h1M1141.51 251.58h1M1149.27 246.6h1M1194.85 255.69h1M1192.87 258.1h1M1177.94 231.57h1M1155.85 249.17h1M1175.85 255.88h1M1150.97 255.17h1M1174.79 247.06h1M1148.08 240.51h1M1171.09 251.53h1M1180.78 248.4h1M1182.56 240.44h1M1160.62 257.7h1M1180.22 246.15h1M1197.51 254.58h1M1183.18 257.7h1M1163.47 256.24h1M1174.74 242.46h1M1164.52 232.05h1M1192.89 257.57h1M1163.11 256.84h1M1148.64 243.44h1M1199.08 248.16h1M1150.17 248.22h1M1142.52 250.62h1M1175.37 248.49h1M1180.5 233.37h1M1192.62 251.8h1M1193.25 237.07h1M1154.32 250.64h1M1194.95 246.4h1M1155.22 242.88h1M1155.08 244.03h1M1197.1 249.42h1M1152.87 255.97h1M1192.31 241.83h1M1141.05 249.11h1M1159.97 234.22h1M1194.17 241.74h1M1150.61 238.53h1M1199.23 240.39h1M1168.61 237.64h1M1145.76 234.34h1M1144.46 243.28h1M1166.23 250.12h1M1189.75 254.83h1M1149.19 246.1h1M1149.36 238.88h1M1163.63 241.54h1M1190.35 242.42h1M1150.36 247.27h1M1156.21 255.69h1M1147.32 234.99h1M1144.82 238.89h1M1186.78 232.91h1M1176.6 255.46h1M1154.53 251.25h1M1183.32 257.28h1M1190.85 248.05h1M1165.88 240.86h1M1148.15 232.17h1M1178.68 238.52h1M1150.16 243.9h1M1149.5 248.24h1M1196.68 240.98h1M1142.93 235.31h1M1159.29 255.21h1M1196.3 247.43h1M1164.21 233.33h1M1190.06 231.37h1M1156.22 250.93h1M1181.54 235.82h1M1198.9 248.74h1M1181.28 237.14h1M1187.58 231.42h1M1176.2 231.27h1M1187.03 246.99h1" fill="none" stroke="#8c4b43" stroke-width="1"/>
<path d="M998 223.2H1006.7V448.3M1099.2 448.3V223.2H1108" fill="none" stroke="#d6d6d6" stroke-width="1.25"/>
<path d="M1006.7 448.3L1099.2 448.3" stroke="#e6e6e6" stroke-width="1.5"/>
<path d="M902.3 213.2L1200.9 213.2" stroke="#00ee00" stroke-width="2"/>
<path d="M902.3 228.9H998M1108 228.9H1200.9M902.3 259.8H966M1140 259.8H1200.9" fill="none" stroke="#00ee00" stroke-width="1.5"/>
<path d="M966 228.9V488.6H1140V228.9" fill="none" stroke="#00ee00" stroke-width="1.4"/>
<path d="M998.4 229V456.2H1108V229" fill="none" stroke="#00ee00" stroke-width="1.3"/>
<path d="M998.5 223V456" fill="none" stroke="#e0e0e0" stroke-width="1.3" stroke-dasharray="40 5 9 6 9 6 9 6 9 6 9 6 9 6"/>
<path d="M1108 232V456" fill="none" stroke="#212830" stroke-width="1.5" stroke-dasharray="1.5 5"/>
<path d="M997.6 213.2V229.6M1108.5 213.2V229.6" fill="none" stroke="#00ee00" stroke-width="2.3"/>
<path d="M998 222.3H1108" fill="none" stroke="#00ee00" stroke-width="1.6"/>
<path d="M1022 213.2V222.2M1037.6 213.2V222.2M1053.2 213.2V222.2M1068.8 213.2V222.2M1084.2 213.2V222.2" fill="none" stroke="#00ee00" stroke-width="1.8"/>
<path d="M999 214.5H1007M1099 214.5H1107" fill="none" stroke="#00ee00" stroke-width="1.2"/>
<path d="M1002.55 224q6.3 1.75 0 3.5t0 3.5t0 3.5t0 3.5t0 3.5t0 3.5t0 3.5t0 3.5t0 3.5t0 3.5t0 3.5t0 3.5t0 3.5t0 3.5t0 3.5t0 3.5t0 3.5t0 3.5t0 3.5t0 3.5t0 3.5t0 3.5t0 3.5t0 3.5t0 3.5t0 3.5t0 3.5t0 3.5t0 3.5t0 3.5t0 3.5t0 3.5t0 3.5t0 3.5t0 3.5t0 3.5t0 3.5t0 3.5t0 3.5t0 3.5t0 3.5t0 3.5t0 3.5t0 3.5t0 3.5t0 3.5t0 3.5t0 3.5t0 3.5t0 3.5t0 3.5t0 3.5t0 3.5t0 3.5t0 3.5t0 3.5t0 3.5t0 3.5t0 3.5t0 3.5t0 3.5t0 3.5t0 3.5t0 3.5t0 3.5t0 3.5" fill="none" stroke="#8c4b43" stroke-width="0.9"/>
<path d="M1103.55 224q6.7 1.75 0 3.5t0 3.5t0 3.5t0 3.5t0 3.5t0 3.5t0 3.5t0 3.5t0 3.5t0 3.5t0 3.5t0 3.5t0 3.5t0 3.5t0 3.5t0 3.5t0 3.5t0 3.5t0 3.5t0 3.5t0 3.5t0 3.5t0 3.5t0 3.5t0 3.5t0 3.5t0 3.5t0 3.5t0 3.5t0 3.5t0 3.5t0 3.5t0 3.5t0 3.5t0 3.5t0 3.5t0 3.5t0 3.5t0 3.5t0 3.5t0 3.5t0 3.5t0 3.5t0 3.5t0 3.5t0 3.5t0 3.5t0 3.5t0 3.5t0 3.5t0 3.5t0 3.5t0 3.5t0 3.5t0 3.5t0 3.5t0 3.5t0 3.5t0 3.5t0 3.5t0 3.5t0 3.5t0 3.5t0 3.5t0 3.5t0 3.5" fill="none" stroke="#8c4b43" stroke-width="0.9"/>
<path d="M1025 452.35q1.75 6.1 3.5 0t3.5 0t3.5 0t3.5 0t3.5 0t3.5 0t3.5 0t3.5 0t3.5 0t3.5 0t3.5 0t3.5 0t3.5 0t3.5 0t3.5 0t3.5 0" fill="none" stroke="#8c4b43" stroke-width="0.9"/>
<path d="M902.3 207L902.3 271.7" stroke="#1010f0" stroke-width="1.5" stroke-dasharray="11 5 22 6 16 5"/>
<path d="M1200.9 207L1200.9 271.7" stroke="#1010f0" stroke-width="1.5" stroke-dasharray="11 5 22 6 16 5"/>
<circle cx="1053" cy="355.2" r="14.8" fill="none" stroke="#00ee00" stroke-width="2.6"/>
<text x="1036" y="337.05" font-size="12.99" fill="#ffff00" textLength="42.3" lengthAdjust="spacingAndGlyphs" word-spacing="4">PVC ø4"</text>
<text x="888.8" y="202.85" font-size="12.99" fill="#ffff00" textLength="119" lengthAdjust="spacingAndGlyphs" word-spacing="4">PLAT STRIP t = 3 mm</text>
<text x="1149.7" y="188.25" font-size="12.99" fill="#ffff00" textLength="76.8" lengthAdjust="spacingAndGlyphs" word-spacing="4">BESI L 30.30.3</text>
<text x="1149.7" y="201.75" font-size="12.99" fill="#ffff00" textLength="120.3" lengthAdjust="spacingAndGlyphs" word-spacing="4">PERKERASAN DRIVEWAY</text>
<path d="M973 200.3L1027 200.3L1035.6 216" fill="none" stroke="#f00000" stroke-width="1.3"/>
<path d="M1035.6 216L1031.95 212.87L1034.93 211.24Z" fill="#f00000"/>
<path d="M1149.7 184.2L1121 184.2L1104.2 213.6" fill="none" stroke="#f00000" stroke-width="1.3"/>
<path d="M1104.2 213.6L1104.96 208.85L1107.91 210.54Z" fill="#f00000"/>
<path d="M1149.7 197.6L1135 197.6L1121 222.4" fill="none" stroke="#f00000" stroke-width="1.3"/>
<path d="M1121 222.4L1121.73 217.65L1124.69 219.32Z" fill="#f00000"/>
<path d="M997.3 190.3L1109 190.3" stroke="#8c4b43" stroke-width="1.2"/>
<path d="M997.3 187L997.3 212" stroke="#8c4b43" stroke-width="1.1"/>
<path d="M994.6 192.5l5.4-4.4" fill="none" stroke="#ffff00" stroke-width="2.5"/>
<path d="M996.1 188.6l2.4 3.4" fill="none" stroke="#ffff00" stroke-width="0.9"/>
<path d="M1109 187L1109 212" stroke="#8c4b43" stroke-width="1.1"/>
<path d="M1106.3 192.5l5.4-4.4" fill="none" stroke="#ffff00" stroke-width="2.5"/>
<path d="M1107.8 188.6l2.4 3.4" fill="none" stroke="#ffff00" stroke-width="0.9"/>
<text x="1045.75" y="188.1" font-size="10.06" fill="#ffff00" textLength="14.8" lengthAdjust="spacingAndGlyphs">360</text>
<path d="M1068.5 225L1068.5 241" stroke="#8c4b43" stroke-width="1"/>
<path d="M1084.6 225L1084.6 241" stroke="#8c4b43" stroke-width="1"/>
<path d="M1068.5 240L1084.6 240" stroke="#8c4b43" stroke-width="1.1"/>
<path d="M1065.8 242.2l5.4-4.4" fill="none" stroke="#ffff00" stroke-width="2.5"/>
<path d="M1067.3 238.3l2.4 3.4" fill="none" stroke="#ffff00" stroke-width="0.9"/>
<path d="M1081.9 242.2l5.4-4.4" fill="none" stroke="#ffff00" stroke-width="2.5"/>
<path d="M1083.4 238.3l2.4 3.4" fill="none" stroke="#ffff00" stroke-width="0.9"/>
<text x="1071.6" y="237.2" font-size="10.06" fill="#ffff00" textLength="10" lengthAdjust="spacingAndGlyphs">50</text>
<path d="M1216.5 213.2L1216.5 448.3" stroke="#8c4b43" stroke-width="1.2"/>
<path d="M1214.3 210.5l4.4 5.4" fill="none" stroke="#ffff00" stroke-width="2.5"/>
<path d="M1214.8 214.4l3.4-2.4" fill="none" stroke="#ffff00" stroke-width="0.9"/>
<path d="M1214.3 352.5l4.4 5.4" fill="none" stroke="#ffff00" stroke-width="2.5"/>
<path d="M1214.8 356.4l3.4-2.4" fill="none" stroke="#ffff00" stroke-width="0.9"/>
<path d="M1214.3 445.6l4.4 5.4" fill="none" stroke="#ffff00" stroke-width="2.5"/>
<path d="M1214.8 449.5l3.4-2.4" fill="none" stroke="#ffff00" stroke-width="0.9"/>
<text x="0" y="0" font-size="10.06" fill="#ffff00" textLength="38" lengthAdjust="spacingAndGlyphs" transform="translate(1214.1 303.2) rotate(-90)">VARIABLE</text>
<text x="0" y="0" font-size="10.06" fill="#ffff00" textLength="15.7" lengthAdjust="spacingAndGlyphs" transform="translate(1214.1 409.6) rotate(-90)">300</text>
<path d="M1201 213.2L1216 213.2" stroke="#8c4b43" stroke-width="1.1"/>
<path d="M1200 355.2L1216 355.2" stroke="#8c4b43" stroke-width="1.1"/>
<path d="M1192 448.3L1216 448.3" stroke="#8c4b43" stroke-width="1.1"/>
<path d="M1006.7 512.6L1099.2 512.6" stroke="#8c4b43" stroke-width="1.2"/>
<path d="M1006.7 497L1006.7 509.6" stroke="#8c4b43" stroke-width="1.1"/>
<path d="M1004 514.8l5.4-4.4" fill="none" stroke="#ffff00" stroke-width="2.5"/>
<path d="M1005.5 510.9l2.4 3.4" fill="none" stroke="#ffff00" stroke-width="0.9"/>
<path d="M1099.2 497L1099.2 509.6" stroke="#8c4b43" stroke-width="1.1"/>
<path d="M1096.5 514.8l5.4-4.4" fill="none" stroke="#ffff00" stroke-width="2.5"/>
<path d="M1098 510.9l2.4 3.4" fill="none" stroke="#ffff00" stroke-width="0.9"/>
<text x="1045.55" y="510.4" font-size="10.06" fill="#ffff00" textLength="14.8" lengthAdjust="spacingAndGlyphs">300</text>
<circle cx="988" cy="549.1" r="22" fill="none" stroke="#ffff00" stroke-width="1.2"/>
<path d="M966 549.1L1147 549.1" stroke="#ffff00" stroke-width="1.3"/>
<text x="985.4" y="544.3" font-size="10.61" fill="#ffff00" textLength="5.2" lengthAdjust="spacingAndGlyphs">6</text>
<text x="1018.2" y="544.7" font-size="22.63" fill="#ffff00" textLength="128.8" lengthAdjust="spacingAndGlyphs" font-weight="bold" word-spacing="5">POTONGAN C</text>
<text x="1018.2" y="565.9" font-size="12.85" fill="#ffff00" textLength="87.3" lengthAdjust="spacing" xml:space="preserve">S K A L A  10 :</text>
<rect x="260.2" y="702.2" width="174" height="174" fill="none" stroke="#00ee00" stroke-width="1.25"/>
<rect x="300.5" y="743" width="93.7" height="93.3" fill="none" stroke="#00ee00" stroke-width="1.25"/>
<path d="M332.5 668.7V702.2M335.3 668.7V702.2M337.5 668.7V702.2M339.7 668.7V702.2M343.3 668.7V702.2M350.8 668.7V702.2M354.7 668.7V702.2M358.3 668.7V702.2M360.8 668.7V702.2M362.3 668.7V702.2" fill="none" stroke="#8a8a8a" stroke-width="0.9"/>
<path d="M331.7 702.2V670.7Q331.7 664.7 339.2 664.7Q343.7 664.7 346.7 668.7Q349.7 673.3 355.2 673.3Q363 673.3 363 669.2V702.2" fill="none" stroke="#00ee00" stroke-width="1.4"/>
<path d="M346.7 668.7Q349.7 664.7 355.2 664.7Q363 664.7 363 669.2" fill="none" stroke="#00ee00" stroke-width="1.4"/>
<path d="M332.5 876.2V919.3M335.3 876.2V919.3M337.5 876.2V919.3M339.7 876.2V919.3M343.3 876.2V919.3M350.8 876.2V919.3M354.7 876.2V919.3M358.3 876.2V919.3M360.8 876.2V919.3M362.3 876.2V919.3" fill="none" stroke="#8a8a8a" stroke-width="0.9"/>
<path d="M331.7 876.2V917.3Q331.7 923.3 339.2 923.3Q343.7 923.3 346.7 919.3Q349.7 914.7 355.2 914.7Q363 914.7 363 918.8V876.2" fill="none" stroke="#00ee00" stroke-width="1.4"/>
<path d="M346.7 919.3Q349.7 923.3 355.2 923.3Q363 923.3 363 918.8" fill="none" stroke="#00ee00" stroke-width="1.4"/>
<path d="M331.7 703V718.3M331.7 726.7V742.5M363 703V718.3M363 726.7V742.5M331.7 837V852.5M331.7 860.8V875.5M363 837V852.5M363 860.8V875.5" fill="none" stroke="#8a8a8a" stroke-width="1.2"/>
<text x="375.3" y="688.45" font-size="12.99" fill="#ffff00" textLength="42.2" lengthAdjust="spacingAndGlyphs" word-spacing="4">PVC ø4"</text>
<text x="375.3" y="910.85" font-size="12.99" fill="#ffff00" textLength="42.2" lengthAdjust="spacingAndGlyphs" word-spacing="4">PVC ø4"</text>
<path d="M375.3 685L350 685" fill="none" stroke="#f00000" stroke-width="1.3"/>
<path d="M350 685L354.5 683.3L354.5 686.7Z" fill="#f00000"/>
<path d="M375.3 907.2L350 907.2" fill="none" stroke="#f00000" stroke-width="1.3"/>
<path d="M350 907.2L354.5 905.5L354.5 908.9Z" fill="#f00000"/>
<path d="M260.2 646.2L434.2 646.2" stroke="#8c4b43" stroke-width="1.2"/>
<path d="M260.2 643.2L260.2 673.3" stroke="#8c4b43" stroke-width="1.1"/>
<path d="M257.5 648.4l5.4-4.4" fill="none" stroke="#ffff00" stroke-width="2.5"/>
<path d="M259 644.5l2.4 3.4" fill="none" stroke="#ffff00" stroke-width="0.9"/>
<path d="M434.2 643.2L434.2 673.3" stroke="#8c4b43" stroke-width="1.1"/>
<path d="M431.5 648.4l5.4-4.4" fill="none" stroke="#ffff00" stroke-width="2.5"/>
<path d="M433 644.5l2.4 3.4" fill="none" stroke="#ffff00" stroke-width="0.9"/>
<text x="339.8" y="644" font-size="10.06" fill="#ffff00" textLength="14.8" lengthAdjust="spacingAndGlyphs">560</text>
<path d="M260.2 661.7L434.2 661.7" stroke="#8c4b43" stroke-width="1.2"/>
<path d="M260.2 658.7L260.2 673.3" stroke="#8c4b43" stroke-width="1.1"/>
<path d="M257.5 663.9l5.4-4.4" fill="none" stroke="#ffff00" stroke-width="2.5"/>
<path d="M259 660l2.4 3.4" fill="none" stroke="#ffff00" stroke-width="0.9"/>
<path d="M301 658.7L301 673.3" stroke="#8c4b43" stroke-width="1.1"/>
<path d="M298.3 663.9l5.4-4.4" fill="none" stroke="#ffff00" stroke-width="2.5"/>
<path d="M299.8 660l2.4 3.4" fill="none" stroke="#ffff00" stroke-width="0.9"/>
<path d="M394.2 658.7L394.2 673.3" stroke="#8c4b43" stroke-width="1.1"/>
<path d="M391.5 663.9l5.4-4.4" fill="none" stroke="#ffff00" stroke-width="2.5"/>
<path d="M393 660l2.4 3.4" fill="none" stroke="#ffff00" stroke-width="0.9"/>
<path d="M434.2 658.7L434.2 673.3" stroke="#8c4b43" stroke-width="1.1"/>
<path d="M431.5 663.9l5.4-4.4" fill="none" stroke="#ffff00" stroke-width="2.5"/>
<path d="M433 660l2.4 3.4" fill="none" stroke="#ffff00" stroke-width="0.9"/>
<text x="273.2" y="659.5" font-size="10.06" fill="#ffff00" textLength="14.8" lengthAdjust="spacingAndGlyphs">130</text>
<text x="340.2" y="659.5" font-size="10.06" fill="#ffff00" textLength="14.8" lengthAdjust="spacingAndGlyphs">300</text>
<text x="406.8" y="659.5" font-size="10.06" fill="#ffff00" textLength="14.8" lengthAdjust="spacingAndGlyphs">130</text>
<rect x="259.7" y="676.5" width="1" height="1" fill="#8c4b43"/>
<rect x="300.5" y="676.5" width="1" height="1" fill="#8c4b43"/>
<rect x="393.7" y="676.5" width="1" height="1" fill="#8c4b43"/>
<rect x="433.7" y="676.5" width="1" height="1" fill="#8c4b43"/>
<path d="M225 702.2L225 876.2" stroke="#8c4b43" stroke-width="1.2"/>
<path d="M222.8 699.5l4.4 5.4" fill="none" stroke="#ffff00" stroke-width="2.5"/>
<path d="M223.3 703.4l3.4-2.4" fill="none" stroke="#ffff00" stroke-width="0.9"/>
<path d="M222.8 873.5l4.4 5.4" fill="none" stroke="#ffff00" stroke-width="2.5"/>
<path d="M223.3 877.4l3.4-2.4" fill="none" stroke="#ffff00" stroke-width="0.9"/>
<text x="0" y="0" font-size="10.06" fill="#ffff00" textLength="15.7" lengthAdjust="spacingAndGlyphs" transform="translate(222.3 797.05) rotate(-90)">560</text>
<path d="M240.5 702.2L240.5 876.2" stroke="#8c4b43" stroke-width="1.2"/>
<path d="M238.3 699.5l4.4 5.4" fill="none" stroke="#ffff00" stroke-width="2.5"/>
<path d="M238.8 703.4l3.4-2.4" fill="none" stroke="#ffff00" stroke-width="0.9"/>
<path d="M238.3 740.3l4.4 5.4" fill="none" stroke="#ffff00" stroke-width="2.5"/>
<path d="M238.8 744.2l3.4-2.4" fill="none" stroke="#ffff00" stroke-width="0.9"/>
<path d="M238.3 833.6l4.4 5.4" fill="none" stroke="#ffff00" stroke-width="2.5"/>
<path d="M238.8 837.5l3.4-2.4" fill="none" stroke="#ffff00" stroke-width="0.9"/>
<path d="M238.3 873.5l4.4 5.4" fill="none" stroke="#ffff00" stroke-width="2.5"/>
<path d="M238.8 877.4l3.4-2.4" fill="none" stroke="#ffff00" stroke-width="0.9"/>
<text x="0" y="0" font-size="10.06" fill="#ffff00" textLength="15.7" lengthAdjust="spacingAndGlyphs" transform="translate(238.3 730.45) rotate(-90)">130</text>
<text x="0" y="0" font-size="10.06" fill="#ffff00" textLength="15.7" lengthAdjust="spacingAndGlyphs" transform="translate(238.3 797.5) rotate(-90)">300</text>
<text x="0" y="0" font-size="10.06" fill="#ffff00" textLength="15.7" lengthAdjust="spacingAndGlyphs" transform="translate(238.3 864.1) rotate(-90)">130</text>
<path d="M225 702.2L252.5 702.2" stroke="#8c4b43" stroke-width="1.1"/>
<path d="M240.5 743L252.5 743" stroke="#8c4b43" stroke-width="1.1"/>
<path d="M240.5 836.3L252.5 836.3" stroke="#8c4b43" stroke-width="1.1"/>
<path d="M225 876.2L252.5 876.2" stroke="#8c4b43" stroke-width="1.1"/>
<rect x="256" y="701.7" width="1" height="1" fill="#8c4b43"/>
<rect x="256" y="742.5" width="1" height="1" fill="#8c4b43"/>
<rect x="256" y="835.8" width="1" height="1" fill="#8c4b43"/>
<rect x="256" y="875.7" width="1" height="1" fill="#8c4b43"/>
<path d="M458.3 760.2L479.1 781.1L437.5 781.1Z" fill="#7a413b"/>
<circle cx="458.3" cy="781.7" r="13.3" fill="#212830" stroke="#ffff00" stroke-width="1.3"/>
<path d="M445 781.7A13.3 13.3 0 0 1 471.6 781.7" fill="none" stroke="#8f6a3a" stroke-width="1.4"/>
<text x="453.3" y="787.3" font-size="15.64" fill="#ffff00" textLength="10" lengthAdjust="spacingAndGlyphs">A</text>
<path d="M458.3 795.2L458.3 810.7" stroke="#1010f0" stroke-width="1.5"/>
<path d="M458.3 810.5L340 810.5" stroke="#1010f0" stroke-width="1.6" stroke-dasharray="18 8 1.5 8"/>
<circle cx="245.5" cy="975.8" r="22" fill="none" stroke="#ffff00" stroke-width="1.2"/>
<path d="M223.5 975.8L498.8 975.8" stroke="#ffff00" stroke-width="1.3"/>
<text x="242.9" y="971" font-size="10.61" fill="#ffff00" textLength="5.2" lengthAdjust="spacingAndGlyphs">1</text>
<text x="276.7" y="971.4" font-size="21.51" fill="#ffff00" textLength="222.1" lengthAdjust="spacingAndGlyphs" font-weight="bold" word-spacing="0.5">BAK KONTROL TERBUKA</text>
<text x="276.7" y="992.2" font-size="11.73" fill="#ffff00" textLength="85.8" lengthAdjust="spacing" xml:space="preserve">S K A L A  10 :</text>
<rect x="601.3" y="703" width="173.7" height="174.2" fill="none" stroke="#00ee00" stroke-width="1.25"/>
<rect x="635.3" y="737.5" width="106" height="105.5" fill="none" stroke="#00ee00" stroke-width="1.25"/>
<rect x="641.7" y="743.8" width="93.3" height="93.4" fill="none" stroke="#8a8a8a" stroke-width="1.3" stroke-dasharray="15 8" stroke-dashoffset="7"/>
<path d="M673.6 668.7V703M676.41 668.7V703M678.62 668.7V703M680.83 668.7V703M684.44 668.7V703M691.96 668.7V703M695.87 668.7V703M699.48 668.7V703M701.99 668.7V703M703.5 668.7V703" fill="none" stroke="#8a8a8a" stroke-width="0.9"/>
<path d="M672.8 703V670.7Q672.8 664.7 680.3 664.7Q684.8 664.7 687.8 668.7Q690.8 673.3 696.3 673.3Q704.2 673.3 704.2 669.2V703" fill="none" stroke="#00ee00" stroke-width="1.4"/>
<path d="M687.8 668.7Q690.8 664.7 696.3 664.7Q704.2 664.7 704.2 669.2" fill="none" stroke="#00ee00" stroke-width="1.4"/>
<path d="M673.6 877.2V926.8M676.41 877.2V926.8M678.62 877.2V926.8M680.83 877.2V926.8M684.44 877.2V926.8M691.96 877.2V926.8M695.87 877.2V926.8M699.48 877.2V926.8M701.99 877.2V926.8M703.5 877.2V926.8" fill="none" stroke="#8a8a8a" stroke-width="0.9"/>
<path d="M672.8 877.2V924.8Q672.8 930.8 680.3 930.8Q684.8 930.8 687.8 926.8Q690.8 922.2 696.3 922.2Q704.2 922.2 704.2 926.3V877.2" fill="none" stroke="#00ee00" stroke-width="1"/>
<path d="M687.8 926.8Q690.8 930.8 696.3 930.8Q704.2 930.8 704.2 926.3" fill="none" stroke="#00ee00" stroke-width="1"/>
<path d="M672.8 704V716.5M672.8 724V737M704.2 704V716.5M704.2 724V737M672.8 843.5V856.5M672.8 864.5V876.5M704.2 843.5V856.5M704.2 864.5V876.5" fill="none" stroke="#8a8a8a" stroke-width="1.2"/>
<rect x="652" y="780.5" width="72.2" height="20" fill="none" stroke="#e6e6e6" stroke-width="1.5" stroke-dasharray="9 4" stroke-dashoffset="4"/>
<rect x="656.7" y="785" width="63.6" height="10.8" fill="none" stroke="#8a8a8a" stroke-width="1.3"/>
<path d="M662.8 790.5H713.5" fill="none" stroke="#00ee00" stroke-width="5" stroke-linecap="round"/>
<path d="M662.8 790.5H713.5" fill="none" stroke="#212830" stroke-width="1.6" stroke-linecap="round"/>
<circle cx="662.6" cy="790.5" r="2" fill="none" stroke="#e6e6e6" stroke-width="0.9"/>
<circle cx="713.7" cy="790.5" r="2" fill="none" stroke="#e6e6e6" stroke-width="0.9"/>
<path d="M688.3 779.5V783.5M688.3 797.5V801.5" fill="none" stroke="#e6e6e6" stroke-width="1.2"/>
<path d="M688.3 788L688.3 793" stroke="#00ee00" stroke-width="0.9"/>
<text x="689.5" y="769.65" font-size="12.99" fill="#ffff00" textLength="51.5" lengthAdjust="spacingAndGlyphs" word-spacing="4">BESI ø1CM</text>
<path d="M689.5 765.6L681 765.6L678.3 768L678.3 789.5" fill="none" stroke="#f00000" stroke-width="1.3"/>
<path d="M678.3 789.5L676.6 785L680 785Z" fill="#f00000"/>
<text x="717" y="688.85" font-size="12.99" fill="#ffff00" textLength="42.2" lengthAdjust="spacingAndGlyphs" word-spacing="4">PVC ø4"</text>
<text x="717" y="909.25" font-size="12.99" fill="#ffff00" textLength="42.2" lengthAdjust="spacingAndGlyphs" word-spacing="4">PVC ø4"</text>
<path d="M717 685.5L690.8 685.5" fill="none" stroke="#f00000" stroke-width="1.3"/>
<path d="M690.8 685.5L695.3 683.8L695.3 687.2Z" fill="#f00000"/>
<path d="M717 905.5L690.8 905.5" fill="none" stroke="#f00000" stroke-width="1.3"/>
<path d="M690.8 905.5L695.3 903.8L695.3 907.2Z" fill="#f00000"/>
<path d="M601.3 644.7L775 644.7" stroke="#8c4b43" stroke-width="1.2"/>
<path d="M601.3 641.7L601.3 673" stroke="#8c4b43" stroke-width="1.1"/>
<path d="M598.6 646.9l5.4-4.4" fill="none" stroke="#ffff00" stroke-width="2.5"/>
<path d="M600.1 643l2.4 3.4" fill="none" stroke="#ffff00" stroke-width="0.9"/>
<path d="M775 641.7L775 673" stroke="#8c4b43" stroke-width="1.1"/>
<path d="M772.3 646.9l5.4-4.4" fill="none" stroke="#ffff00" stroke-width="2.5"/>
<path d="M773.8 643l2.4 3.4" fill="none" stroke="#ffff00" stroke-width="0.9"/>
<text x="680.75" y="642.5" font-size="10.06" fill="#ffff00" textLength="14.8" lengthAdjust="spacingAndGlyphs">560</text>
<path d="M601.3 660L775 660" stroke="#8c4b43" stroke-width="1.2"/>
<path d="M601.3 657L601.3 673" stroke="#8c4b43" stroke-width="1.1"/>
<path d="M598.6 662.2l5.4-4.4" fill="none" stroke="#ffff00" stroke-width="2.5"/>
<path d="M600.1 658.3l2.4 3.4" fill="none" stroke="#ffff00" stroke-width="0.9"/>
<path d="M635.3 657L635.3 673" stroke="#8c4b43" stroke-width="1.1"/>
<path d="M632.6 662.2l5.4-4.4" fill="none" stroke="#ffff00" stroke-width="2.5"/>
<path d="M634.1 658.3l2.4 3.4" fill="none" stroke="#ffff00" stroke-width="0.9"/>
<path d="M642 657L642 673" stroke="#8c4b43" stroke-width="1.1"/>
<path d="M639.3 662.2l5.4-4.4" fill="none" stroke="#ffff00" stroke-width="2.5"/>
<path d="M640.8 658.3l2.4 3.4" fill="none" stroke="#ffff00" stroke-width="0.9"/>
<path d="M734.7 657L734.7 673" stroke="#8c4b43" stroke-width="1.1"/>
<path d="M732 662.2l5.4-4.4" fill="none" stroke="#ffff00" stroke-width="2.5"/>
<path d="M733.5 658.3l2.4 3.4" fill="none" stroke="#ffff00" stroke-width="0.9"/>
<path d="M741.3 657L741.3 673" stroke="#8c4b43" stroke-width="1.1"/>
<path d="M738.6 662.2l5.4-4.4" fill="none" stroke="#ffff00" stroke-width="2.5"/>
<path d="M740.1 658.3l2.4 3.4" fill="none" stroke="#ffff00" stroke-width="0.9"/>
<path d="M775 657L775 673" stroke="#8c4b43" stroke-width="1.1"/>
<path d="M772.3 662.2l5.4-4.4" fill="none" stroke="#ffff00" stroke-width="2.5"/>
<path d="M773.8 658.3l2.4 3.4" fill="none" stroke="#ffff00" stroke-width="0.9"/>
<text x="610.9" y="657.8" font-size="10.06" fill="#ffff00" textLength="14.8" lengthAdjust="spacingAndGlyphs">110</text>
<text x="680.95" y="657.8" font-size="10.06" fill="#ffff00" textLength="14.8" lengthAdjust="spacingAndGlyphs">300</text>
<text x="750.75" y="657.8" font-size="10.06" fill="#ffff00" textLength="14.8" lengthAdjust="spacingAndGlyphs">110</text>
<text x="633.7" y="653.6" font-size="10.06" fill="#ffff00" textLength="10" lengthAdjust="spacingAndGlyphs">20</text>
<text x="733" y="653.6" font-size="10.06" fill="#ffff00" textLength="10" lengthAdjust="spacingAndGlyphs">20</text>
<rect x="600.8" y="675.5" width="1" height="1" fill="#8c4b43"/>
<rect x="634.8" y="675.5" width="1" height="1" fill="#8c4b43"/>
<rect x="641.5" y="675.5" width="1" height="1" fill="#8c4b43"/>
<rect x="734.2" y="675.5" width="1" height="1" fill="#8c4b43"/>
<rect x="740.8" y="675.5" width="1" height="1" fill="#8c4b43"/>
<rect x="774.5" y="675.5" width="1" height="1" fill="#8c4b43"/>
<path d="M556.2 703L556.2 877.2" stroke="#8c4b43" stroke-width="1.2"/>
<path d="M554 700.3l4.4 5.4" fill="none" stroke="#ffff00" stroke-width="2.5"/>
<path d="M554.5 704.2l3.4-2.4" fill="none" stroke="#ffff00" stroke-width="0.9"/>
<path d="M554 874.5l4.4 5.4" fill="none" stroke="#ffff00" stroke-width="2.5"/>
<path d="M554.5 878.4l3.4-2.4" fill="none" stroke="#ffff00" stroke-width="0.9"/>
<text x="0" y="0" font-size="10.06" fill="#ffff00" textLength="15.7" lengthAdjust="spacingAndGlyphs" transform="translate(553.6 797.95) rotate(-90)">560</text>
<path d="M571.7 703L571.7 877.2" stroke="#8c4b43" stroke-width="1.2"/>
<path d="M569.5 700.3l4.4 5.4" fill="none" stroke="#ffff00" stroke-width="2.5"/>
<path d="M570 704.2l3.4-2.4" fill="none" stroke="#ffff00" stroke-width="0.9"/>
<path d="M569.5 734.8l4.4 5.4" fill="none" stroke="#ffff00" stroke-width="2.5"/>
<path d="M570 738.7l3.4-2.4" fill="none" stroke="#ffff00" stroke-width="0.9"/>
<path d="M569.5 741.1l4.4 5.4" fill="none" stroke="#ffff00" stroke-width="2.5"/>
<path d="M570 745l3.4-2.4" fill="none" stroke="#ffff00" stroke-width="0.9"/>
<path d="M569.5 834.5l4.4 5.4" fill="none" stroke="#ffff00" stroke-width="2.5"/>
<path d="M570 838.4l3.4-2.4" fill="none" stroke="#ffff00" stroke-width="0.9"/>
<path d="M569.5 840.3l4.4 5.4" fill="none" stroke="#ffff00" stroke-width="2.5"/>
<path d="M570 844.2l3.4-2.4" fill="none" stroke="#ffff00" stroke-width="0.9"/>
<path d="M569.5 874.5l4.4 5.4" fill="none" stroke="#ffff00" stroke-width="2.5"/>
<path d="M570 878.4l3.4-2.4" fill="none" stroke="#ffff00" stroke-width="0.9"/>
<text x="0" y="0" font-size="10.06" fill="#ffff00" textLength="15.7" lengthAdjust="spacingAndGlyphs" transform="translate(569.2 728.1) rotate(-90)">110</text>
<text x="0" y="0" font-size="10.06" fill="#ffff00" textLength="15.7" lengthAdjust="spacingAndGlyphs" transform="translate(569.2 798.35) rotate(-90)">300</text>
<text x="0" y="0" font-size="10.06" fill="#ffff00" textLength="15.7" lengthAdjust="spacingAndGlyphs" transform="translate(569.2 867.95) rotate(-90)">110</text>
<text x="0" y="0" font-size="10.06" fill="#ffff00" textLength="10.5" lengthAdjust="spacingAndGlyphs" transform="translate(564.4 745.75) rotate(-90)">20</text>
<text x="0" y="0" font-size="10.06" fill="#ffff00" textLength="10.5" lengthAdjust="spacingAndGlyphs" transform="translate(564.4 844.95) rotate(-90)">20</text>
<path d="M556.2 703L584.5 703" stroke="#8c4b43" stroke-width="1.1"/>
<rect x="587" y="702.5" width="1" height="1" fill="#8c4b43"/>
<path d="M571.7 737.5L584.5 737.5" stroke="#8c4b43" stroke-width="1.1"/>
<rect x="587" y="737" width="1" height="1" fill="#8c4b43"/>
<path d="M571.7 743.8L584.5 743.8" stroke="#8c4b43" stroke-width="1.1"/>
<rect x="587" y="743.3" width="1" height="1" fill="#8c4b43"/>
<path d="M571.7 837.2L584.5 837.2" stroke="#8c4b43" stroke-width="1.1"/>
<rect x="587" y="836.7" width="1" height="1" fill="#8c4b43"/>
<path d="M571.7 843L584.5 843" stroke="#8c4b43" stroke-width="1.1"/>
<rect x="587" y="842.5" width="1" height="1" fill="#8c4b43"/>
<path d="M556.2 877.2L584.5 877.2" stroke="#8c4b43" stroke-width="1.1"/>
<rect x="587" y="876.7" width="1" height="1" fill="#8c4b43"/>
<path d="M799.5 760.2L820.3 781.1L778.7 781.1Z" fill="#7a413b"/>
<circle cx="799.5" cy="781.7" r="13.3" fill="#212830" stroke="#ffff00" stroke-width="1.3"/>
<path d="M786.2 781.7A13.3 13.3 0 0 1 812.8 781.7" fill="none" stroke="#8f6a3a" stroke-width="1.4"/>
<text x="794.5" y="787.3" font-size="15.64" fill="#ffff00" textLength="10" lengthAdjust="spacingAndGlyphs" font-weight="bold">B</text>
<path d="M799.5 795.2L799.5 810.7" stroke="#1010f0" stroke-width="1.5"/>
<path d="M799.5 810.5L681.2 810.5" stroke="#1010f0" stroke-width="1.6" stroke-dasharray="18 8 1.5 8"/>
<circle cx="570.5" cy="975.8" r="22" fill="none" stroke="#ffff00" stroke-width="1.2"/>
<path d="M548.5 975.8L835 975.8" stroke="#ffff00" stroke-width="1.3"/>
<text x="567.9" y="971" font-size="10.61" fill="#ffff00" textLength="5.2" lengthAdjust="spacingAndGlyphs">2</text>
<text x="601.2" y="971.4" font-size="21.51" fill="#ffff00" textLength="233.8" lengthAdjust="spacingAndGlyphs" font-weight="bold" word-spacing="0.5">BAK KONTROL TERTUTUP</text>
<text x="601.2" y="992.2" font-size="11.73" fill="#ffff00" textLength="85.8" lengthAdjust="spacing" xml:space="preserve">S K A L A  10 :</text>
<rect x="965.9" y="704.7" width="174.5" height="173.6" fill="none" stroke="#00ee00" stroke-width="1.25"/>
<path d="M915.7 777H965.9M915.7 779.2H965.9M915.7 781.6H965.9M915.7 784H965.9M915.7 787H965.9M915.7 795H965.9M915.7 798.6H965.9M915.7 802H965.9M915.7 804.6H965.9M915.7 806.6H965.9" fill="none" stroke="#8a8a8a" stroke-width="0.9"/>
<path d="M965.9 807.9H917.7Q911.7 807.9 911.7 800.4Q911.7 795.9 915.7 792.9Q920.3 789.9 920.3 784.4Q920.3 776 916.2 776H965.9" fill="none" stroke="#00ee00" stroke-width="1.15"/>
<path d="M915.7 792.9Q911.7 789.9 911.7 784.4Q911.7 776 916.2 776" fill="none" stroke="#00ee00" stroke-width="1.15"/>
<path d="M1140.4 777H1190.8M1140.4 779.2H1190.8M1140.4 781.6H1190.8M1140.4 784H1190.8M1140.4 787H1190.8M1140.4 795H1190.8M1140.4 798.6H1190.8M1140.4 802H1190.8M1140.4 804.6H1190.8M1140.4 806.6H1190.8" fill="none" stroke="#8a8a8a" stroke-width="0.9"/>
<path d="M1140.4 807.9H1188.8Q1194.8 807.9 1194.8 800.4Q1194.8 795.9 1190.8 792.9Q1186.2 789.9 1186.2 784.4Q1186.2 776 1190.3 776H1140.4" fill="none" stroke="#00ee00" stroke-width="1.15"/>
<path d="M1190.8 792.9Q1194.8 789.9 1194.8 784.4Q1194.8 776 1190.3 776" fill="none" stroke="#00ee00" stroke-width="1.15"/>
<path d="M966.5 776.3H977M985 776.3H996.5M966.5 807.4H977M985 807.4H996.5M1109.5 776.3H1121M1129 776.3H1140M1109.5 807.4H1121M1129 807.4H1140" fill="none" stroke="#8a8a8a" stroke-width="1.2"/>
<rect x="996.8" y="735.9" width="112.4" height="111.5" fill="none" stroke="#00ee00" stroke-width="2.6"/>
<rect x="1006.5" y="745.3" width="93.3" height="93.3" fill="none" stroke="#00ee00" stroke-width="1.4"/>
<path d="M996.8 735.9L1006.5 745.3M1109.2 735.9L1099.8 745.3M996.8 847.4L1006.5 838.6M1109.2 847.4L1099.8 838.6" fill="none" stroke="#00ee00" stroke-width="1.3"/>
<path d="M1006.5 760.7H1099.8M1006.5 776.1H1099.8M1006.5 791.9H1099.8M1006.5 807.2H1099.8M1006.5 822.8H1099.8" fill="none" stroke="#00ee00" stroke-width="2"/>
<path d="M1019.2 682.1L1039.4 661.9L1039.4 702.3Z" fill="#7a413b"/>
<path d="M1039.4 661.9L1019.2 682.1L1039.4 702.3" fill="none" stroke="#ffff00" stroke-width="1.4"/>
<circle cx="1039" cy="682.1" r="13.8" fill="#212830" stroke="#7a413b" stroke-width="1.4"/>
<text x="1034.3" y="686.9" font-size="13.41" fill="#ffff00" textLength="9.4" lengthAdjust="spacingAndGlyphs">C</text>
<path d="M1053.5 682H1069V704" fill="none" stroke="#1010f0" stroke-width="1.5" stroke-dasharray="2 1"/>
<path d="M1069 704L1069 803" stroke="#1010f0" stroke-width="1.6" stroke-dasharray="1.5 8 18 8" stroke-dashoffset="-5"/>
<text x="1179" y="729.4" font-size="12.29" fill="#ffff00" textLength="58" lengthAdjust="spacingAndGlyphs" word-spacing="4">PLAT STRIP</text>
<text x="1179" y="740.4" font-size="12.29" fill="#ffff00" textLength="84.2" lengthAdjust="spacingAndGlyphs" word-spacing="4">t=3 mm 50 O.C</text>
<text x="1179" y="751.9" font-size="12.29" fill="#ffff00" textLength="44.3" lengthAdjust="spacingAndGlyphs" word-spacing="4">PVC ø4"</text>
<path d="M1179 727.3L1092 727.3L1092 777" fill="none" stroke="#f00000" stroke-width="1.3"/>
<path d="M1092 777L1090.3 772.5L1093.7 772.5Z" fill="#f00000"/>
<path d="M1179 746.9L1153.5 746.9L1153.5 792" fill="none" stroke="#f00000" stroke-width="1.3"/>
<path d="M1153.5 792L1151.8 787.5L1155.2 787.5Z" fill="#f00000"/>
<path d="M890.4 704.7L890.4 878.3" stroke="#8c4b43" stroke-width="1.2"/>
<path d="M888.2 702l4.4 5.4" fill="none" stroke="#ffff00" stroke-width="2.5"/>
<path d="M888.7 705.9l3.4-2.4" fill="none" stroke="#ffff00" stroke-width="0.9"/>
<path d="M888.2 875.6l4.4 5.4" fill="none" stroke="#ffff00" stroke-width="2.5"/>
<path d="M888.7 879.5l3.4-2.4" fill="none" stroke="#ffff00" stroke-width="0.9"/>
<text x="0" y="0" font-size="10.06" fill="#ffff00" textLength="15.7" lengthAdjust="spacingAndGlyphs" transform="translate(887.9 799.35) rotate(-90)">560</text>
<path d="M906.9 704.7L906.9 878.3" stroke="#8c4b43" stroke-width="1.2"/>
<path d="M904.7 702l4.4 5.4" fill="none" stroke="#ffff00" stroke-width="2.5"/>
<path d="M905.2 705.9l3.4-2.4" fill="none" stroke="#ffff00" stroke-width="0.9"/>
<path d="M904.7 733.2l4.4 5.4" fill="none" stroke="#ffff00" stroke-width="2.5"/>
<path d="M905.2 737.1l3.4-2.4" fill="none" stroke="#ffff00" stroke-width="0.9"/>
<path d="M904.7 742.6l4.4 5.4" fill="none" stroke="#ffff00" stroke-width="2.5"/>
<path d="M905.2 746.5l3.4-2.4" fill="none" stroke="#ffff00" stroke-width="0.9"/>
<path d="M904.7 835.9l4.4 5.4" fill="none" stroke="#ffff00" stroke-width="2.5"/>
<path d="M905.2 839.8l3.4-2.4" fill="none" stroke="#ffff00" stroke-width="0.9"/>
<path d="M904.7 844.7l4.4 5.4" fill="none" stroke="#ffff00" stroke-width="2.5"/>
<path d="M905.2 848.6l3.4-2.4" fill="none" stroke="#ffff00" stroke-width="0.9"/>
<path d="M904.7 875.6l4.4 5.4" fill="none" stroke="#ffff00" stroke-width="2.5"/>
<path d="M905.2 879.5l3.4-2.4" fill="none" stroke="#ffff00" stroke-width="0.9"/>
<text x="0" y="0" font-size="10.06" fill="#ffff00" textLength="15.7" lengthAdjust="spacingAndGlyphs" transform="translate(904.4 728.15) rotate(-90)">100</text>
<text x="0" y="0" font-size="10.06" fill="#ffff00" textLength="15.7" lengthAdjust="spacingAndGlyphs" transform="translate(904.4 799.8) rotate(-90)">300</text>
<text x="0" y="0" font-size="10.06" fill="#ffff00" textLength="15.7" lengthAdjust="spacingAndGlyphs" transform="translate(904.4 870.7) rotate(-90)">100</text>
<text x="0" y="0" font-size="10.06" fill="#ffff00" textLength="10.5" lengthAdjust="spacingAndGlyphs" transform="translate(899.9 745.75) rotate(-90)">30</text>
<text x="0" y="0" font-size="10.06" fill="#ffff00" textLength="10.5" lengthAdjust="spacingAndGlyphs" transform="translate(899.9 848.25) rotate(-90)">30</text>
<path d="M890.4 704.7L921.5 704.7" stroke="#8c4b43" stroke-width="1.1"/>
<rect x="924.5" y="704.2" width="1" height="1" fill="#8c4b43"/>
<path d="M906.9 735.9L921.5 735.9" stroke="#8c4b43" stroke-width="1.1"/>
<rect x="924.5" y="735.4" width="1" height="1" fill="#8c4b43"/>
<path d="M906.9 745.3L921.5 745.3" stroke="#8c4b43" stroke-width="1.1"/>
<rect x="924.5" y="744.8" width="1" height="1" fill="#8c4b43"/>
<path d="M906.9 838.6L921.5 838.6" stroke="#8c4b43" stroke-width="1.1"/>
<rect x="924.5" y="838.1" width="1" height="1" fill="#8c4b43"/>
<path d="M906.9 847.4L921.5 847.4" stroke="#8c4b43" stroke-width="1.1"/>
<rect x="924.5" y="846.9" width="1" height="1" fill="#8c4b43"/>
<path d="M890.4 878.3L921.5 878.3" stroke="#8c4b43" stroke-width="1.1"/>
<rect x="924.5" y="877.8" width="1" height="1" fill="#8c4b43"/>
<path d="M965.9 912L1140.4 912" stroke="#8c4b43" stroke-width="1.2"/>
<path d="M965.9 896L965.9 909" stroke="#8c4b43" stroke-width="1.1"/>
<path d="M963.2 914.2l5.4-4.4" fill="none" stroke="#ffff00" stroke-width="2.5"/>
<path d="M964.7 910.3l2.4 3.4" fill="none" stroke="#ffff00" stroke-width="0.9"/>
<path d="M997.4 896L997.4 909" stroke="#8c4b43" stroke-width="1.1"/>
<path d="M994.7 914.2l5.4-4.4" fill="none" stroke="#ffff00" stroke-width="2.5"/>
<path d="M996.2 910.3l2.4 3.4" fill="none" stroke="#ffff00" stroke-width="0.9"/>
<path d="M1006.3 896L1006.3 909" stroke="#8c4b43" stroke-width="1.1"/>
<path d="M1003.6 914.2l5.4-4.4" fill="none" stroke="#ffff00" stroke-width="2.5"/>
<path d="M1005.1 910.3l2.4 3.4" fill="none" stroke="#ffff00" stroke-width="0.9"/>
<path d="M1099.5 896L1099.5 909" stroke="#8c4b43" stroke-width="1.1"/>
<path d="M1096.8 914.2l5.4-4.4" fill="none" stroke="#ffff00" stroke-width="2.5"/>
<path d="M1098.3 910.3l2.4 3.4" fill="none" stroke="#ffff00" stroke-width="0.9"/>
<path d="M1108.5 896L1108.5 909" stroke="#8c4b43" stroke-width="1.1"/>
<path d="M1105.8 914.2l5.4-4.4" fill="none" stroke="#ffff00" stroke-width="2.5"/>
<path d="M1107.3 910.3l2.4 3.4" fill="none" stroke="#ffff00" stroke-width="0.9"/>
<path d="M1140.4 896L1140.4 909" stroke="#8c4b43" stroke-width="1.1"/>
<path d="M1137.7 914.2l5.4-4.4" fill="none" stroke="#ffff00" stroke-width="2.5"/>
<path d="M1139.2 910.3l2.4 3.4" fill="none" stroke="#ffff00" stroke-width="0.9"/>
<text x="974.25" y="910.6" font-size="10.06" fill="#ffff00" textLength="14.8" lengthAdjust="spacingAndGlyphs">100</text>
<text x="1045.5" y="910.6" font-size="10.06" fill="#ffff00" textLength="14.8" lengthAdjust="spacingAndGlyphs">300</text>
<text x="1117.05" y="910.6" font-size="10.06" fill="#ffff00" textLength="14.8" lengthAdjust="spacingAndGlyphs">100</text>
<path d="M965.9 928.4L1140.4 928.4" stroke="#8c4b43" stroke-width="1.2"/>
<path d="M963.2 930.6l5.4-4.4" fill="none" stroke="#ffff00" stroke-width="2.5"/>
<path d="M964.7 926.7l2.4 3.4" fill="none" stroke="#ffff00" stroke-width="0.9"/>
<path d="M1137.7 930.6l5.4-4.4" fill="none" stroke="#ffff00" stroke-width="2.5"/>
<path d="M1139.2 926.7l2.4 3.4" fill="none" stroke="#ffff00" stroke-width="0.9"/>
<text x="1045.75" y="926.6" font-size="10.06" fill="#ffff00" textLength="14.8" lengthAdjust="spacingAndGlyphs">560</text>
<path d="M965.9 912L965.9 928.4" stroke="#8c4b43" stroke-width="1.1"/>
<path d="M1140.4 912L1140.4 928.4" stroke="#8c4b43" stroke-width="1.1"/>
<text x="997" y="926.6" font-size="10.06" fill="#ffff00" textLength="10" lengthAdjust="spacingAndGlyphs">30</text>
<text x="1099.4" y="926.6" font-size="10.06" fill="#ffff00" textLength="10" lengthAdjust="spacingAndGlyphs">30</text>
<rect x="965.4" y="892.5" width="1" height="1" fill="#8c4b43"/>
<rect x="996.9" y="892.5" width="1" height="1" fill="#8c4b43"/>
<rect x="1005.8" y="892.5" width="1" height="1" fill="#8c4b43"/>
<rect x="1099" y="892.5" width="1" height="1" fill="#8c4b43"/>
<rect x="1108" y="892.5" width="1" height="1" fill="#8c4b43"/>
<rect x="1139.9" y="892.5" width="1" height="1" fill="#8c4b43"/>
<circle cx="908.1" cy="975.8" r="22" fill="none" stroke="#ffff00" stroke-width="1.2"/>
<path d="M886.1 975.8L1128 975.8" stroke="#ffff00" stroke-width="1.3"/>
<text x="905.5" y="971" font-size="10.61" fill="#ffff00" textLength="5.2" lengthAdjust="spacingAndGlyphs">3</text>
<text x="939.6" y="971.4" font-size="21.23" fill="#ffff00" textLength="188.4" lengthAdjust="spacingAndGlyphs" font-weight="bold" word-spacing="0.5">BAK KONTROL GRILL</text>
<text x="939.6" y="992.2" font-size="11.73" fill="#ffff00" textLength="86.4" lengthAdjust="spacing" xml:space="preserve">S K A L A  10 :</text>
<text x="3" y="190.8" font-size="11.73" fill="#e4e4e4" textLength="125" lengthAdjust="spacingAndGlyphs">[−][Top][2D Wireframe]</text>
<path d="M1851 190.3L1861 190.3" stroke="#fff" stroke-width="2"/>
<path d="M1871.5 186.5h7v7h-7zM1873.5 186.5v-2.5h7v7h-2" fill="none" stroke="#fff" stroke-width="1.4"/>
<path d="M1891 184l9 8M1900 184l-9 8" fill="none" stroke="#fff" stroke-width="2"/>
<rect x="1911.7" y="172.6" width="7.3" height="830" fill="#dbe5f1"/>
<circle cx="1829" cy="279" r="52.6" fill="none" stroke="#434950" stroke-width="14"/>
<rect x="1803" y="253.3" width="51.7" height="51.3" fill="#ababab" stroke="#8b8b8b" stroke-width="0.8"/>
<rect x="1813.2" y="263.3" width="31.8" height="31.7" fill="#9a9a9a"/>
<text x="1818" y="283.4" font-size="11.45" fill="#4f4f4f" textLength="22" lengthAdjust="spacingAndGlyphs" font-weight="bold">TOP</text>
<text x="1822.5" y="229.9" font-size="19.27" fill="#b9b9b9" textLength="13" lengthAdjust="spacingAndGlyphs" font-weight="bold">N</text>
<text x="1822.75" y="342.5" font-size="19.27" fill="#b9b9b9" textLength="12.5" lengthAdjust="spacingAndGlyphs" font-weight="bold">S</text>
<text x="1762.6" y="286.3" font-size="19.27" fill="#b9b9b9" textLength="20" lengthAdjust="spacingAndGlyphs" font-weight="bold">W</text>
<text x="1879.8" y="286.3" font-size="19.27" fill="#b9b9b9" textLength="12" lengthAdjust="spacingAndGlyphs" font-weight="bold">E</text>
<rect x="1805.4" y="366.5" width="47.6" height="17.2" fill="#8c8c8c" stroke="#6c6c6c" stroke-width="1" rx="3.5"/>
<text x="1809.5" y="378.8" font-size="10.61" fill="#555" textLength="24.5" lengthAdjust="spacingAndGlyphs">WCS</text>
<path d="M1838.5 372h10l-5 6z" fill="#9c9c9c" stroke="#5f5f5f" stroke-width="0.9"/>
<rect x="1876" y="409" width="32" height="211.7" fill="#5b5f63" rx="3.5"/>
<circle cx="1902" cy="414.5" r="3" fill="none" stroke="#464a4f" stroke-width="1"/>
<path d="M1900.3 412.8l3.4 3.4m0-3.4l-3.4 3.4" fill="none" stroke="#464a4f" stroke-width="0.9"/>
<path d="M1881.5 439q0-11 11-11h9.5v9.5q0 11-10.5 11q-10 0-10-9.5z" fill="none" stroke="#464a4f" stroke-width="1.3"/>
<circle cx="1891.8" cy="438" r="6.2" fill="none" stroke="#464a4f" stroke-width="1.3"/>
<path d="M1884 446q8-6 16 0" fill="none" stroke="#464a4f" stroke-width="1.1"/>
<path d="M1889.5 458.5h5.5l-2.7 3z" fill="#464a4f"/>
<path d="M1881 481.5q4-1.5 6 3l0-12.5q1.5-2 3 0v-2q1.5-2 3 0v1.5q1.5-2 3 0v2.5q1.5-2 3 .5v10q0 8-7 8h-2q-4 0-9-11z" fill="none" stroke="#464a4f" stroke-width="1.2"/>
<path d="M1881.5 499.5l13 13M1894.5 499.5l-13 13M1881 503v-4h4M1895 503v-4h-4M1881 509v4h4" fill="none" stroke="#464a4f" stroke-width="1.2"/>
<circle cx="1895.5" cy="512.5" r="4.2" fill="none" stroke="#464a4f" stroke-width="1.3"/>
<path d="M1898.5 515.5L1903 520" stroke="#464a4f" stroke-width="2"/>
<path d="M1889.5 528.5h5.5l-2.7 3z" fill="#464a4f"/>
<ellipse cx="1891.5" cy="549.5" rx="10.5" ry="4" fill="none" stroke="#464a4f" stroke-width="1.2"/>
<path d="M1889.5 557v-14h-2.5l4.5-6 4.5 6h-2.5v14z" fill="#5b5f63" stroke="#464a4f" stroke-width="1.1"/>
<path d="M1883 553.5l4-3v6z" fill="#464a4f"/>
<path d="M1889.5 566.5h5.5l-2.7 3z" fill="#464a4f"/>
<rect x="1881" y="578.5" width="6" height="6" fill="none" stroke="#464a4f" stroke-width="1"/>
<rect x="1888.8" y="578.5" width="6" height="6" fill="none" stroke="#464a4f" stroke-width="1"/>
<rect x="1896.6" y="578.5" width="6" height="6" fill="none" stroke="#464a4f" stroke-width="1"/>
<rect x="1881" y="588.5" width="15.5" height="12.5" fill="none" stroke="#464a4f" stroke-width="1.1"/>
<path d="M1885.5 590.5v8l7-4z" fill="#464a4f"/>
<circle cx="1902" cy="614.5" r="3" fill="none" stroke="#464a4f" stroke-width="1"/>
<path d="M1900 613.5h4M1900.6 615h2.8" fill="none" stroke="#464a4f" stroke-width="0.8"/>
<path d="M20.3 932V982.5H70.8" fill="none" stroke="#f0f0f0" stroke-width="1.2"/>
<rect x="16" y="977.5" width="9.6" height="9.4" fill="none" stroke="#f0f0f0" stroke-width="1.2"/>
<text x="22" y="927.6" font-size="17.6" fill="#f0f0f0" textLength="13" lengthAdjust="spacingAndGlyphs" stroke="#212830" stroke-width="0.5">Y</text>
<text x="75" y="981" font-size="17.88" fill="#f0f0f0" textLength="13" lengthAdjust="spacingAndGlyphs" stroke="#212830" stroke-width="0.5">X</text>
<rect x="617.5" y="903" width="696.5" height="29.5" fill="rgba(104,104,104,0.78)" rx="2"/>
<text x="619.2" y="915" font-size="11.6" fill="#dcdcdc" textLength="693" lengthAdjust="spacingAndGlyphs" font-family='"DejaVu Sans Mono","Liberation Mono",monospace' xml:space="preserve">Autodesk DWG.  This file is a TrustedDWG last saved by an Autodesk application or Autodesk licensed</text>
<text x="619.2" y="930" font-size="11.5" fill="#dcdcdc" textLength="84" lengthAdjust="spacingAndGlyphs" font-family='"DejaVu Sans Mono","Liberation Mono",monospace'>application.</text>
<rect x="617.5" y="938.3" width="59.5" height="14.2" fill="rgba(108,108,108,0.92)" rx="2"/>
<text x="619.5" y="949.3" font-size="11.5" fill="#f0f0f0" textLength="56" lengthAdjust="spacingAndGlyphs" font-family='"DejaVu Sans Mono","Liberation Mono",monospace'>Command:</text>
<rect x="617.5" y="958.8" width="59.5" height="14.2" fill="rgba(108,108,108,0.92)" rx="2"/>
<text x="619.5" y="969.8" font-size="11.5" fill="#f0f0f0" textLength="56" lengthAdjust="spacingAndGlyphs" font-family='"DejaVu Sans Mono","Liberation Mono",monospace'>Command:</text>
<rect x="555.5" y="977" width="55.5" height="25" fill="rgba(92,92,92,0.74)"/>
<rect x="610.8" y="977" width="754.7" height="25" fill="rgba(252,250,248,0.72)"/>
<rect x="555.5" y="977" width="810" height="25" fill="none" stroke="#4a4a4a" stroke-width="0.8"/>
<rect x="560" y="981" width="1" height="1.2" fill="#9a9a9a"/>
<rect x="562.5" y="981" width="1" height="1.2" fill="#9a9a9a"/>
<rect x="560" y="984.4" width="1" height="1.2" fill="#9a9a9a"/>
<rect x="562.5" y="984.4" width="1" height="1.2" fill="#9a9a9a"/>
<rect x="560" y="987.8" width="1" height="1.2" fill="#9a9a9a"/>
<rect x="562.5" y="987.8" width="1" height="1.2" fill="#9a9a9a"/>
<rect x="560" y="991.2" width="1" height="1.2" fill="#9a9a9a"/>
<rect x="562.5" y="991.2" width="1" height="1.2" fill="#9a9a9a"/>
<rect x="560" y="994.6" width="1" height="1.2" fill="#9a9a9a"/>
<rect x="562.5" y="994.6" width="1" height="1.2" fill="#9a9a9a"/>
<rect x="560" y="998" width="1" height="1.2" fill="#9a9a9a"/>
<rect x="562.5" y="998" width="1" height="1.2" fill="#9a9a9a"/>
<path d="M570.5 984.5l9 9m0-9l-9 9" fill="none" stroke="#d6d6d6" stroke-width="1.5"/>
<path d="M591.5 996l7.5-8" fill="none" stroke="#d6d6d6" stroke-width="2.2"/>
<path d="M599.5 983a4.2 4.2 0 1 0 4.5 5.5l-3 .5-1.8-2.3z" fill="#d6d6d6"/>
<rect x="616.3" y="984.3" width="14.8" height="10.4" fill="rgba(255,255,255,0.25)" stroke="#3a3a3a" stroke-width="1.3"/>
<rect x="616.3" y="984.3" width="14.8" height="2.2" fill="#3a3a3a"/>
<path d="M618.5 989l2.5 1.8-2.5 1.8M622 993h3.5" fill="none" stroke="#2b2b2b" stroke-width="0.9"/>
<path d="M634.5 988.2h4l-2 2.4z" fill="#3a3a3a"/>
<text x="648.7" y="993.7" font-size="11.73" fill="#808080" textLength="95.8" lengthAdjust="spacingAndGlyphs" font-style="italic" font-family='"DejaVu Sans Mono","Liberation Mono",monospace'>Type a command</text>
<path d="M1353.5 991l4-4.4 4 4.4z" fill="#2f2f2f"/>
<rect x="0" y="0" width="1919" height="24.5" fill="#5f2217"/>
<rect x="41" y="0" width="262" height="23.8" fill="#a8a9ab"/>
<path d="M50 4h11l5 5v9h-16z" fill="#fff"/>
<path d="M61 4v5h5" fill="none" stroke="#bbb" stroke-width="1"/>
<path d="M74 18l3-10h14l-3.5 10z" fill="#dbe8f5"/>
<path d="M74 18v-13h6l1.5 2h7v1.5" fill="none" stroke="#f4f4f4" stroke-width="1.6"/>
<path d="M98 4h15v15h-15z" fill="#e0e0e0"/>
<rect x="101.5" y="4" width="8" height="6" fill="#aaa"/>
<rect x="101" y="13" width="9" height="6" fill="#bdbdbd"/>
<rect x="103" y="15" width="4" height="3" fill="#eee"/>
<path d="M122 4h15v15h-15z" fill="#e0e0e0"/>
<rect x="125.5" y="4" width="8" height="6" fill="#aaa"/>
<rect x="125" y="13" width="9" height="6" fill="#bdbdbd"/>
<rect x="127" y="15" width="4" height="3" fill="#eee"/>
<path d="M132 16l5-6 3 2.5-5 6-4 1z" fill="#e8b76a"/>
<rect x="147" y="4" width="10" height="15" fill="#5d5d5d" rx="1.5"/>
<rect x="148.5" y="6" width="7" height="10" fill="#888"/>
<path d="M153 19l1.5-5h7.5l-1.5 5z" fill="#f0c674"/>
<rect x="174" y="4" width="10" height="15" fill="#e9e9e9" rx="1.5"/>
<rect x="175.5" y="6" width="7" height="10" fill="#666"/>
<path d="M171 10h6v-2.5l4 3.5-4 3.5v-2.5h-6z" fill="#4aa3df"/>
<rect x="196" y="4" width="11" height="6" fill="#f0f0f0"/>
<rect x="193" y="9" width="17" height="8" fill="#e4e4e4" rx="1"/>
<rect x="196" y="14" width="11" height="6" fill="#4db2ec"/>
<path d="M219 11l6-5v3c6 0 9 2 11 6-3-2-6-3-11-3v3z" fill="#b9b9b9"/>
<path d="M240.5 10.25L245.5 10.25L243 13.25Z" fill="#c9c9c9"/>
<path d="M271 11l-6-5v3c-6 0-9 2-11 6 3-2 6-3 11-3v3z" fill="#b9b9b9"/>
<path d="M276.5 10.25L281.5 10.25L279 13.25Z" fill="#c9c9c9"/>
<rect x="290" y="7.8" width="8" height="1.4" fill="#f4f4f4"/>
<path d="M290 11.05L298 11.05L294 15.05Z" fill="#f4f4f4"/>
<text x="664" y="16.3" font-size="12.01" fill="#130605" textLength="130" lengthAdjust="spacingAndGlyphs">Autodesk AutoCAD 2019</text>
<text x="806" y="16.3" font-size="12.01" fill="#130605" textLength="141.3" lengthAdjust="spacingAndGlyphs">DETAIL BAK KONTROL.dwg</text>
<rect x="1310.5" y="0" width="447" height="23.8" fill="#a8a9ab"/>
<path d="M1314.5 8l4 4-4 4z" fill="#f5f5f5"/>
<rect x="1324.5" y="1.8" width="178.8" height="20.4" fill="#7e7e7e" stroke="#3a3a3a" stroke-width="1.2"/>
<text x="1327" y="16.1" font-size="11.45" fill="#cdcdcd" textLength="122" lengthAdjust="spacingAndGlyphs" font-style="italic">Type a keyword or phrase</text>
<path d="M1509.5 17.5v-7l1.2-4.5h2.6l1.2 4.5v7z" fill="#f0f0f0" stroke="#333" stroke-width="0.9"/>
<rect x="1509.8" y="12.5" width="4.4" height="4.6" fill="#fdfdfd" stroke="#333" stroke-width="0.8"/>
<path d="M1517 17.5v-7l1.2-4.5h2.6l1.2 4.5v7z" fill="#f0f0f0" stroke="#333" stroke-width="0.9"/>
<rect x="1517.3" y="12.5" width="4.4" height="4.6" fill="#fdfdfd" stroke="#333" stroke-width="0.8"/>
<rect x="1513.5" y="8" width="4" height="3" fill="#444"/>
<circle cx="1540" cy="8.5" r="3.8" fill="#f6f6f6" stroke="#555" stroke-width="0.8"/>
<path d="M1533 19c0-5 3-7 7-7s7 2 7 7z" fill="#f6f6f6" stroke="#555" stroke-width="0.8"/>
<text x="1553" y="17.4" font-size="12.29" fill="#fafafa" textLength="36" lengthAdjust="spacingAndGlyphs">Sign In</text>
<path d="M1637.4 11.2L1642.6 11.2L1640 14.3Z" fill="#f2f2f2"/>
<path d="M1654 6h3l2.5 8h8l1.8-6h-11" fill="none" stroke="#3a3a3a" stroke-width="1.6"/>
<circle cx="1660.5" cy="17" r="1.4" fill="#3a3a3a"/>
<circle cx="1666.5" cy="17" r="1.4" fill="#3a3a3a"/>
<path d="M1686 5l7 12h-14z" fill="none" stroke="#3a3a3a" stroke-width="1.6"/>
<circle cx="1686" cy="6.5" r="2" fill="#ababab" stroke="#3a3a3a" stroke-width="1.2"/>
<circle cx="1680" cy="16" r="2" fill="#ababab" stroke="#3a3a3a" stroke-width="1.2"/>
<circle cx="1692" cy="16" r="2" fill="#ababab" stroke="#3a3a3a" stroke-width="1.2"/>
<path d="M1699.4 11.2L1704.6 11.2L1702 14.3Z" fill="#f2f2f2"/>
<path d="M1714.5 3L1714.5 21" stroke="#8e8e8e" stroke-width="1"/>
<circle cx="1732" cy="12" r="7" fill="#f7f7f7" stroke="#3d3d55" stroke-width="1.3"/>
<text x="1732" y="16.5" font-size="12.5" fill="#2b2b6b" text-anchor="middle" font-weight="bold">?</text>
<path d="M1747.4 11.2L1752.6 11.2L1750 14.3Z" fill="#f2f2f2"/>
<path d="M1799 12.5L1809 12.5" stroke="#fff" stroke-width="1.2"/>
<path d="M1844.5 9.5h8v8h-8zM1847 9.5v-2.5h8v8h-2.5" fill="none" stroke="#fff" stroke-width="1.1"/>
<path d="M1890 7l10 10M1900 7l-10 10" fill="none" stroke="#fff" stroke-width="1.2"/>
<rect x="0" y="24.5" width="1919" height="20.5" fill="#545454"/>
<path d="M0 24.8L1919 24.8" stroke="#2e2e2e" stroke-width="1"/>
<path d="M46.5 45.6v-16q0-2 2-2h45.5q2 0 2 2v16" fill="#5e5e5e" stroke="#2a2a2a" stroke-width="1"/>
<text x="55" y="39.3" font-size="12.01" fill="#f1f1f1" textLength="33" lengthAdjust="spacingAndGlyphs">Home</text>
<text x="108" y="39.3" font-size="12.01" fill="#f1f1f1" textLength="29" lengthAdjust="spacingAndGlyphs">Insert</text>
<text x="157" y="39.3" font-size="12.01" fill="#f1f1f1" textLength="49" lengthAdjust="spacingAndGlyphs">Annotate</text>
<text x="226" y="39.3" font-size="12.01" fill="#f1f1f1" textLength="56" lengthAdjust="spacingAndGlyphs">Parametric</text>
<text x="303" y="39.3" font-size="12.01" fill="#f1f1f1" textLength="25" lengthAdjust="spacingAndGlyphs">View</text>
<text x="348" y="39.3" font-size="12.01" fill="#f1f1f1" textLength="43" lengthAdjust="spacingAndGlyphs">Manage</text>
<text x="411" y="39.3" font-size="12.01" fill="#f1f1f1" textLength="38" lengthAdjust="spacingAndGlyphs">Output</text>
<text x="469" y="39.3" font-size="12.01" fill="#f1f1f1" textLength="42" lengthAdjust="spacingAndGlyphs">Add-ins</text>
<text x="531" y="39.3" font-size="12.01" fill="#f1f1f1" textLength="61" lengthAdjust="spacingAndGlyphs">Collaborate</text>
<text x="612" y="39.3" font-size="12.01" fill="#f1f1f1" textLength="69" lengthAdjust="spacingAndGlyphs">Express Tools</text>
<text x="701" y="39.3" font-size="12.01" fill="#f1f1f1" textLength="76" lengthAdjust="spacingAndGlyphs">Featured Apps</text>
<rect x="217.5" y="27.5" width="74" height="15" fill="none" stroke="#6f6f6f" stroke-width="1" rx="1.5" stroke-dasharray="1 1"/>
<rect x="809" y="30" width="13" height="8.5" fill="#f1f1f1" rx="2.5"/>
<path d="M812.5 36l3-3.5 3 3.5z" fill="#3a3a3a"/>
<path d="M826.4 33.7L831.6 33.7L829 36.8Z" fill="#f1f1f1"/>
<rect x="0" y="45" width="1919" height="101" fill="url(#gRibDark)"/>
<rect x="0" y="44.5" width="1671" height="99" fill="#3a3a3a"/>
<path d="M0 45L1919 45" stroke="#2b2b2b" stroke-width="1.2"/>
<rect x="2" y="46" width="222" height="78" fill="#5b5b5b"/>
<rect x="2" y="124" width="222" height="18" fill="url(#gPanTitle)"/>
<rect x="2.5" y="46" width="221" height="96" fill="none" stroke="#636363" stroke-width="1"/>
<text x="93" y="136.8" font-size="12.01" fill="#f1f1f1" textLength="27" lengthAdjust="spacingAndGlyphs">Draw</text>
<path d="M126.4 131.3L133.6 131.3L130 135.2Z" fill="#f1f1f1"/>
<rect x="226" y="46" width="248.5" height="78" fill="#5b5b5b"/>
<rect x="226" y="124" width="248.5" height="18" fill="url(#gPanTitle)"/>
<rect x="226.5" y="46" width="247.5" height="96" fill="none" stroke="#636363" stroke-width="1"/>
<text x="325" y="136.8" font-size="12.01" fill="#f1f1f1" textLength="38" lengthAdjust="spacingAndGlyphs">Modify</text>
<path d="M369.4 131.3L376.6 131.3L373 135.2Z" fill="#f1f1f1"/>
<rect x="477" y="46" width="186" height="78" fill="#5b5b5b"/>
<rect x="477" y="124" width="186" height="18" fill="url(#gPanTitle)"/>
<rect x="477.5" y="46" width="185" height="96" fill="none" stroke="#636363" stroke-width="1"/>
<text x="533" y="136.8" font-size="12.01" fill="#f1f1f1" textLength="59" lengthAdjust="spacingAndGlyphs">Annotation</text>
<path d="M599.4 131.3L606.6 131.3L603 135.2Z" fill="#f1f1f1"/>
<rect x="666" y="46" width="271" height="78" fill="#5b5b5b"/>
<rect x="666" y="124" width="271" height="18" fill="url(#gPanTitle)"/>
<rect x="666.5" y="46" width="270" height="96" fill="none" stroke="#636363" stroke-width="1"/>
<text x="778" y="136.8" font-size="12.01" fill="#f1f1f1" textLength="33" lengthAdjust="spacingAndGlyphs">Layers</text>
<path d="M817.4 131.3L824.6 131.3L821 135.2Z" fill="#f1f1f1"/>
<rect x="939.5" y="46" width="157.5" height="78" fill="#5b5b5b"/>
<rect x="939.5" y="124" width="157.5" height="18" fill="url(#gPanTitle)"/>
<rect x="940" y="46" width="156.5" height="96" fill="none" stroke="#636363" stroke-width="1"/>
<text x="997" y="136.8" font-size="12.01" fill="#f1f1f1" textLength="29" lengthAdjust="spacingAndGlyphs">Block</text>
<path d="M1032.4 131.3L1039.6 131.3L1036 135.2Z" fill="#f1f1f1"/>
<rect x="1100" y="46" width="262" height="78" fill="#5b5b5b"/>
<rect x="1100" y="124" width="262" height="18" fill="url(#gPanTitle)"/>
<rect x="1100.5" y="46" width="261" height="96" fill="none" stroke="#636363" stroke-width="1"/>
<text x="1192" y="136.8" font-size="12.01" fill="#f1f1f1" textLength="53" lengthAdjust="spacingAndGlyphs">Properties</text>
<path d="M1251.4 131.3L1258.6 131.3L1255 135.2Z" fill="#f1f1f1"/>
<rect x="1365" y="46" width="66" height="78" fill="#5b5b5b"/>
<rect x="1365" y="124" width="66" height="18" fill="url(#gPanTitle)"/>
<rect x="1365.5" y="46" width="65" height="96" fill="none" stroke="#636363" stroke-width="1"/>
<text x="1372" y="136.8" font-size="12.01" fill="#f1f1f1" textLength="38" lengthAdjust="spacingAndGlyphs">Groups</text>
<path d="M1416.4 131.3L1423.6 131.3L1420 135.2Z" fill="#f1f1f1"/>
<rect x="1434" y="46" width="95" height="78" fill="#5b5b5b"/>
<rect x="1434" y="124" width="95" height="18" fill="url(#gPanTitle)"/>
<rect x="1434.5" y="46" width="94" height="96" fill="none" stroke="#636363" stroke-width="1"/>
<text x="1454" y="136.8" font-size="12.01" fill="#f1f1f1" textLength="39" lengthAdjust="spacingAndGlyphs">Utilities</text>
<path d="M1499.4 131.3L1506.6 131.3L1503 135.2Z" fill="#f1f1f1"/>
<rect x="1531.5" y="46" width="77.5" height="78" fill="#5b5b5b"/>
<rect x="1531.5" y="124" width="77.5" height="18" fill="url(#gPanTitle)"/>
<rect x="1532" y="46" width="76.5" height="96" fill="none" stroke="#636363" stroke-width="1"/>
<text x="1544" y="136.8" font-size="12.01" fill="#f1f1f1" textLength="52" lengthAdjust="spacingAndGlyphs">Clipboard</text>
<rect x="1611.5" y="46" width="59" height="78" fill="#5b5b5b"/>
<rect x="1611.5" y="124" width="59" height="18" fill="url(#gPanTitle)"/>
<rect x="1612" y="46" width="58" height="96" fill="none" stroke="#636363" stroke-width="1"/>
<text x="1615" y="136.8" font-size="12.01" fill="#f1f1f1" textLength="25" lengthAdjust="spacingAndGlyphs">View</text>
<path d="M1646.4 131.3L1653.6 131.3L1650 135.2Z" fill="#f1f1f1"/>
<path d="M0 142.9L1919 142.9" stroke="#2a2a2a" stroke-width="1.3"/>
<path d="M0 144L1919 144" stroke="#666" stroke-width="1"/>
<path d="M1352.5 130.5l4 4m0-3.5v3.5h-3.5" fill="none" stroke="#f1f1f1" stroke-width="1"/>
<path d="M1661.5 130.5l4 4m0-3.5v3.5h-3.5" fill="none" stroke="#f1f1f1" stroke-width="1"/>
<rect x="1" y="1" width="39" height="39" fill="url(#gAppBtn)" stroke="#2b2b2b" stroke-width="1"/>
<text x="4.5" y="28.3" font-size="35" fill="url(#gA)" textLength="23.5" lengthAdjust="spacingAndGlyphs" font-weight="bold" stroke="#8e0f14" stroke-width="0.5">A</text>
<path d="M31.3 18.5L37.7 18.5L34.5 22Z" fill="#222"/>
<path d="M9 82L37 54" stroke="#dcdcdc" stroke-width="1.2"/>
<rect x="7.5" y="80.5" width="3" height="3" fill="#5eb7ee"/>
<rect x="35.5" y="52.5" width="3" height="3" fill="#5eb7ee"/>
<text x="12" y="99.3" font-size="12.01" fill="#f1f1f1" textLength="22" lengthAdjust="spacingAndGlyphs">Line</text>
<path d="M51 75.5h20M71 60.5a7.5 7.5 0 0 1 0 15" fill="none" stroke="#dcdcdc" stroke-width="1.2"/>
<rect x="49.5" y="74" width="3" height="3" fill="#5eb7ee"/>
<rect x="69.5" y="74" width="3" height="3" fill="#5eb7ee"/>
<rect x="69.5" y="59" width="3" height="3" fill="#5eb7ee"/>
<text x="45" y="99.3" font-size="12.01" fill="#f1f1f1" textLength="42" lengthAdjust="spacingAndGlyphs">Polyline</text>
<circle cx="115" cy="67" r="15" fill="none" stroke="#dcdcdc" stroke-width="1.2"/>
<rect x="113.5" y="66" width="3" height="3" fill="#5eb7ee"/>
<path d="M116 66.5l8-8m-4.5 0h4.5v4.5" fill="none" stroke="#5eb7ee" stroke-width="1.2"/>
<text x="101" y="99.3" font-size="12.01" fill="#f1f1f1" textLength="30" lengthAdjust="spacingAndGlyphs">Circle</text>
<path d="M112.4 105.2L117.6 105.2L115 108.3Z" fill="#f1f1f1"/>
<path d="M149 81q3-22 27-27" fill="none" stroke="#dcdcdc" stroke-width="1.2"/>
<rect x="147.5" y="80" width="3" height="3" fill="#5eb7ee"/>
<rect x="155.5" y="61" width="3" height="3" fill="#5eb7ee"/>
<rect x="174.5" y="53" width="3" height="3" fill="#5eb7ee"/>
<text x="153" y="99.3" font-size="12.01" fill="#f1f1f1" textLength="17" lengthAdjust="spacingAndGlyphs">Arc</text>
<path d="M158.4 105.2L163.6 105.2L161 108.3Z" fill="#f1f1f1"/>
<rect x="188" y="56.5" width="13" height="9" fill="none" stroke="#dcdcdc" stroke-width="1.2"/>
<rect x="186.75" y="55.25" width="2.5" height="2.5" fill="#5eb7ee"/>
<rect x="199.75" y="64.25" width="2.5" height="2.5" fill="#5eb7ee"/>
<path d="M209.4 60.2L214.6 60.2L212 63.3Z" fill="#f1f1f1"/>
<ellipse cx="194" cy="85" rx="7" ry="4.5" fill="none" stroke="#dcdcdc" stroke-width="1.2" stroke-dasharray="9 2"/>
<rect x="193" y="84" width="2" height="2" fill="#5eb7ee"/>
<rect x="193" y="79" width="2" height="2" fill="#5eb7ee"/>
<rect x="200" y="84" width="2" height="2" fill="#5eb7ee"/>
<path d="M209.4 84.2L214.6 84.2L212 87.3Z" fill="#f1f1f1"/>
<rect x="189" y="104" width="11" height="11" fill="#3f7fb0"/>
<path d="M187 104h15M187 115h15M189 102v15M200 102v15" fill="none" stroke="#dcdcdc" stroke-width="1.1"/>
<path d="M190 114l9-9M190 109l5-5M194 114l5-5" fill="none" stroke="#8fd0ff" stroke-width="0.8"/>
<path d="M209.4 108.2L214.6 108.2L212 111.3Z" fill="#f1f1f1"/>
<path d="M240 53.5v15M232.5 61h15M240 53l-2.5 3h5zM240 69l-2.5-3h5zM232 61l3-2.5v5zM248 61l-3-2.5v5z" fill="#e8e8e8" stroke="#e8e8e8" stroke-width="1.2"/>
<text x="254" y="65.3" font-size="12.01" fill="#f1f1f1" textLength="29" lengthAdjust="spacingAndGlyphs">Move</text>
<circle cx="235.5" cy="81" r="2.6" fill="none" stroke="#dcdcdc" stroke-width="1.1"/>
<path d="M240.5 79h4.5v3.5" fill="none" stroke="#dcdcdc" stroke-width="1.1"/>
<path d="M243.3 82l1.7 2.2 1.7-2.2z" fill="#dcdcdc"/>
<circle cx="238" cy="89.5" r="2.8" fill="none" stroke="#5eb7ee" stroke-width="1.1"/>
<circle cx="243.5" cy="89.5" r="2.8" fill="none" stroke="#5eb7ee" stroke-width="1.1"/>
<text x="254" y="89.3" font-size="12.01" fill="#f1f1f1" textLength="27" lengthAdjust="spacingAndGlyphs">Copy</text>
<path d="M233 102h6v14h-6zM239 116h9l-3-14h-3" fill="none" stroke="#dcdcdc" stroke-width="1.1"/>
<path d="M242 102h3l3 14" fill="none" stroke="#5eb7ee" stroke-width="1.1"/>
<path d="M236 113h6m-2-2l2 2-2 2" fill="none" stroke="#e8e8e8" stroke-width="1"/>
<text x="254" y="113.3" font-size="12.01" fill="#f1f1f1" textLength="36" lengthAdjust="spacingAndGlyphs">Stretch</text>
<path d="M317 55.5a6.5 6.5 0 1 0 2.8 2.2" fill="none" stroke="#e0e0e0" stroke-width="1.3"/>
<path d="M313.5 53l4.5 2.3-3.3 3.5z" fill="#e0e0e0"/>
<text x="326" y="65.3" font-size="12.01" fill="#f1f1f1" textLength="34" lengthAdjust="spacingAndGlyphs">Rotate</text>
<path d="M311.5 78v13h-6z" fill="none" stroke="#dcdcdc" stroke-width="1.1"/>
<path d="M313.5 78v13h6z" fill="none" stroke="#5eb7ee" stroke-width="1.1"/>
<text x="326" y="89.3" font-size="12.01" fill="#f1f1f1" textLength="33" lengthAdjust="spacingAndGlyphs">Mirror</text>
<path d="M305 102h15v14h-6" fill="none" stroke="#5eb7ee" stroke-width="1.1"/>
<rect x="305" y="108.5" width="8" height="7.5" fill="none" stroke="#dcdcdc" stroke-width="1.1"/>
<text x="326" y="113.3" font-size="12.01" fill="#f1f1f1" textLength="27" lengthAdjust="spacingAndGlyphs">Scale</text>
<path d="M374 54.5h7m2 0h6" fill="none" stroke="#5eb7ee" stroke-width="1" stroke-dasharray="1.5 1"/>
<path d="M379 56l6 10M386 56l-5 10" fill="none" stroke="#e4e4e4" stroke-width="1.3"/>
<circle cx="382" cy="67.5" r="1.6" fill="none" stroke="#e4e4e4" stroke-width="1"/>
<circle cx="386.5" cy="66" r="1.6" fill="none" stroke="#e4e4e4" stroke-width="1"/>
<text x="395" y="65.3" font-size="12.01" fill="#f1f1f1" textLength="23" lengthAdjust="spacingAndGlyphs">Trim</text>
<path d="M428.4 60.2L433.6 60.2L431 63.3Z" fill="#f1f1f1"/>
<path d="M374.5 92v-6q0-8 8-8" fill="none" stroke="#5eb7ee" stroke-width="1.2"/>
<path d="M384.5 77.5h5M374.5 93v-3" fill="none" stroke="#dcdcdc" stroke-width="1.1"/>
<text x="395" y="89.3" font-size="12.01" fill="#f1f1f1" textLength="25" lengthAdjust="spacingAndGlyphs">Fillet</text>
<path d="M430.4 84.2L435.6 84.2L433 87.3Z" fill="#f1f1f1"/>
<rect x="375.5" y="102.5" width="5.5" height="5.5" fill="none" stroke="#dcdcdc" stroke-width="1.1"/>
<rect x="383.5" y="102.5" width="5.5" height="5.5" fill="none" stroke="#5eb7ee" stroke-width="1.1"/>
<rect x="375.5" y="110.5" width="5.5" height="5.5" fill="none" stroke="#5eb7ee" stroke-width="1.1"/>
<rect x="383.5" y="110.5" width="5.5" height="5.5" fill="none" stroke="#5eb7ee" stroke-width="1.1"/>
<text x="395" y="113.3" font-size="12.01" fill="#f1f1f1" textLength="28" lengthAdjust="spacingAndGlyphs">Array</text>
<path d="M430.4 108.2L435.6 108.2L433 111.3Z" fill="#f1f1f1"/>
<path d="M452 68.5l10-14 3.5 2.5-10 13.5z" fill="#f0c27a"/>
<path d="M452 68.5l2-2.8 3.5 2.5-1.8 2.5z" fill="#a0522d"/>
<path d="M449.5 69.5L466 69.5" stroke="#5eb7ee" stroke-width="1"/>
<path d="M450 83h10v10h-10zM450 83l4-4h10l-4 4M460 93l4-4v-10" fill="none" stroke="#5eb7ee" stroke-width="1.1"/>
<rect x="452" y="85" width="6" height="8" fill="none" stroke="#dcdcdc" stroke-width="1"/>
<path d="M465 103h-9a6 6 0 0 0 0 12h9M465 106h-8.5a3 3 0 0 0 0 6h8.5" fill="none" stroke="#5eb7ee" stroke-width="1.1"/>
<text x="486.5" y="82" font-size="40" fill="#dcdcdc" textLength="27" lengthAdjust="spacingAndGlyphs">A</text>
<text x="490" y="99.3" font-size="12.01" fill="#f1f1f1" textLength="20" lengthAdjust="spacingAndGlyphs">Text</text>
<path d="M496.4 105.2L501.6 105.2L499 108.3Z" fill="#f1f1f1"/>
<path d="M536.5 52v32M567.5 52v32M537 58.5h30" fill="none" stroke="#e4e4e4" stroke-width="1.1"/>
<path d="M537 58.5l3.5-2v4zM567 58.5l-3.5-2v4z" fill="#e4e4e4"/>
<path d="M543.54 78.92L538.84 77.21" stroke="#f5c46b" stroke-width="2.2"/>
<path d="M546.84 74.63L543.97 70.53" stroke="#f5c46b" stroke-width="2.2"/>
<path d="M552 73L552 68" stroke="#f5c46b" stroke-width="2.2"/>
<path d="M557.16 74.63L560.03 70.53" stroke="#f5c46b" stroke-width="2.2"/>
<path d="M560.46 78.92L565.16 77.21" stroke="#f5c46b" stroke-width="2.2"/>
<text x="524" y="99.3" font-size="12.01" fill="#f1f1f1" textLength="57" lengthAdjust="spacingAndGlyphs">Dimension</text>
<path d="M589.5 54v14M604.5 54v14" fill="none" stroke="#dcdcdc" stroke-width="1.1"/>
<path d="M590 61h14" fill="none" stroke="#5eb7ee" stroke-width="1.1"/>
<path d="M590 61l3-1.8v3.6zM604 61l-3-1.8v3.6z" fill="#5eb7ee"/>
<text x="610" y="65.3" font-size="12.01" fill="#f1f1f1" textLength="32" lengthAdjust="spacingAndGlyphs">Linear</text>
<path d="M649.4 60.2L654.6 60.2L652 63.3Z" fill="#f1f1f1"/>
<circle cx="601.5" cy="81.5" r="3" fill="none" stroke="#dcdcdc" stroke-width="1.1"/>
<path d="M599 83.5l-5 3-3.5 5" fill="none" stroke="#dcdcdc" stroke-width="1.1"/>
<path d="M589.5 92.5l1-4 3 2z" fill="#dcdcdc"/>
<text x="610" y="89.3" font-size="12.01" fill="#f1f1f1" textLength="35" lengthAdjust="spacingAndGlyphs">Leader</text>
<path d="M652.4 84.2L657.6 84.2L655 87.3Z" fill="#f1f1f1"/>
<rect x="589.5" y="102.5" width="15" height="13" fill="none" stroke="#dcdcdc" stroke-width="1.2"/>
<path d="M589.5 106.5h15M589.5 109.5h15M589.5 112.5h15M594.5 106v9.5M599.5 106v9.5" fill="none" stroke="#dcdcdc" stroke-width="1"/>
<text x="610" y="113.3" font-size="12.01" fill="#f1f1f1" textLength="27" lengthAdjust="spacingAndGlyphs">Table</text>
<path d="M688 53h20l-8 6h-20z" fill="#d9d9d9"/>
<path d="M688 61.5h20l-8 6h-20z" fill="#cfcfcf"/>
<path d="M688 70h20l-8 6h-20z" fill="#d9d9d9"/>
<rect x="699" y="66" width="13" height="17.5" fill="#e8e8e8" rx="1.2"/>
<rect x="701" y="68" width="9" height="6.5" fill="#57a9e3"/>
<path d="M702 77.5h7m-1.5-1.5l1.5 1.5M709 80.5h-7m1.5 1.5l-1.5-1.5" fill="none" stroke="#444" stroke-width="0.9"/>
<text x="683" y="99.3" font-size="12.01" fill="#f1f1f1" textLength="28" lengthAdjust="spacingAndGlyphs">Layer</text>
<text x="670" y="114.3" font-size="12.01" fill="#f1f1f1" textLength="53" lengthAdjust="spacingAndGlyphs">Properties</text>
<rect x="727.5" y="51" width="207.5" height="20.5" fill="url(#gCombo)" stroke="#2c2c2c" stroke-width="1" rx="1"/>
<circle cx="739" cy="59" r="4.3" fill="#f5c46b"/>
<rect x="737" y="62.5" width="4" height="3" fill="#f5c46b"/>
<rect x="737.3" y="65.8" width="3.4" height="1.6" fill="#eee"/>
<circle cx="757.5" cy="61" r="3.6" fill="#f5c46b"/>
<path d="M762.5 61L764.5 61" stroke="#f5c46b" stroke-width="1.1"/>
<path d="M761.04 64.54L762.45 65.95" stroke="#f5c46b" stroke-width="1.1"/>
<path d="M757.5 66L757.5 68" stroke="#f5c46b" stroke-width="1.1"/>
<path d="M753.96 64.54L752.55 65.95" stroke="#f5c46b" stroke-width="1.1"/>
<path d="M752.5 61L750.5 61" stroke="#f5c46b" stroke-width="1.1"/>
<path d="M753.96 57.46L752.55 56.05" stroke="#f5c46b" stroke-width="1.1"/>
<path d="M757.5 56L757.5 54" stroke="#f5c46b" stroke-width="1.1"/>
<path d="M761.04 57.46L762.45 56.05" stroke="#f5c46b" stroke-width="1.1"/>
<rect x="770" y="60.5" width="8.5" height="7" fill="#f5c46b"/>
<path d="M776 60.5v-3a2.8 2.8 0 0 1 5.6 0v1.5" fill="none" stroke="#f5c46b" stroke-width="1.5"/>
<rect x="773.6" y="62.8" width="1.4" height="2.6" fill="#5a4a20"/>
<rect x="790.5" y="55" width="12.5" height="13" fill="#fff" stroke="#111" stroke-width="1.2"/>
<text x="809.5" y="65.3" font-size="12.01" fill="#f1f1f1" textLength="5.5" lengthAdjust="spacingAndGlyphs">0</text>
<path d="M925.6 59.4L932.4 59.4L929 63.1Z" fill="#f1f1f1"/>
<path d="M734.5 79h9l-3.5 3.2h-9z" fill="#d6d6d6"/>
<circle cx="743.5" cy="86.5" r="3" fill="#5eb7ee"/>
<rect x="742.2" y="89" width="2.6" height="2.6" fill="#e8e8e8"/>
<path d="M758.5 78h9l-3.5 3.2h-9z" fill="#d6d6d6"/>
<path d="M758.5 81.5h9l-3.5 3.2h-9z" fill="#d6d6d6"/>
<path d="M758.5 85h9l-3.5 3.2h-9z" fill="#5eb7ee"/>
<path d="M770 86l-5 5m0-3.5v3.5h3.5" fill="none" stroke="#e0e0e0" stroke-width="1.1"/>
<path d="M782.5 79h9l-3.5 3.2h-9z" fill="#d6d6d6"/>
<path d="M790.5 85.5v7M787.5 87.2l6 3.6M793.5 87.2l-6 3.6" fill="none" stroke="#5eb7ee" stroke-width="1.1"/>
<path d="M806.5 79h9l-3.5 3.2h-9z" fill="#d6d6d6"/>
<rect x="812" y="86.5" width="7" height="6" fill="#5eb7ee"/>
<path d="M813.5 86.5v-2a2 2 0 0 1 4 0v2" fill="none" stroke="#5eb7ee" stroke-width="1.2"/>
<circle cx="834.5" cy="79.5" r="3" fill="#d0d0d0"/>
<path d="M831 82h12l-4 3.4h-12z" fill="#5eb7ee"/>
<path d="M831 86h12l-4 3h-12z" fill="#d6d6d6"/>
<path d="M831 89.5h12l-4 3h-12z" fill="#d6d6d6"/>
<text x="848" y="89.3" font-size="12.01" fill="#f1f1f1" textLength="72" lengthAdjust="spacingAndGlyphs">Make Current</text>
<path d="M734.5 102h9l-3.5 3.2h-9z" fill="#d6d6d6"/>
<path d="M734.5 105.5h9l-3.5 3.2h-9z" fill="#d6d6d6"/>
<circle cx="743.5" cy="110.5" r="3" fill="#f5c46b"/>
<rect x="742.2" y="113" width="2.6" height="2.6" fill="#e8e8e8"/>
<path d="M758.5 102h9l-3.5 3.2h-9z" fill="#d6d6d6"/>
<path d="M758.5 105.5h9l-3.5 3.2h-9z" fill="#d6d6d6"/>
<path d="M758.5 109h9l-3.5 3.2h-9z" fill="#5eb7ee"/>
<path d="M764.5 116l5.5-5.5m-3.8 0h3.8v3.8" fill="none" stroke="#e0e0e0" stroke-width="1.1"/>
<path d="M782.5 102h9l-3.5 3.2h-9z" fill="#d6d6d6"/>
<path d="M782.5 105.5h9l-3.5 3.2h-9z" fill="#d6d6d6"/>
<path d="M782.5 109h7l-3.5 3.2h-7z" fill="#d6d6d6"/>
<circle cx="790.5" cy="112.5" r="2.4" fill="#f5c46b"/>
<path d="M794.1 112.5L795.3 112.5" stroke="#f5c46b" stroke-width="0.9"/>
<path d="M793.05 115.05L793.89 115.89" stroke="#f5c46b" stroke-width="0.9"/>
<path d="M790.5 116.1L790.5 117.3" stroke="#f5c46b" stroke-width="0.9"/>
<path d="M787.95 115.05L787.11 115.89" stroke="#f5c46b" stroke-width="0.9"/>
<path d="M786.9 112.5L785.7 112.5" stroke="#f5c46b" stroke-width="0.9"/>
<path d="M787.95 109.95L787.11 109.11" stroke="#f5c46b" stroke-width="0.9"/>
<path d="M790.5 108.9L790.5 107.7" stroke="#f5c46b" stroke-width="0.9"/>
<path d="M793.05 109.95L793.89 109.11" stroke="#f5c46b" stroke-width="0.9"/>
<path d="M806.5 103h9l-3.5 3.2h-9z" fill="#d6d6d6"/>
<rect x="810" y="111" width="7" height="5.5" fill="#f5c46b"/>
<path d="M815 111v-2a2 2 0 0 1 4 0v1" fill="none" stroke="#f5c46b" stroke-width="1.2"/>
<path d="M830.5 102h10l-3.5 3.2h-10z" fill="#d6d6d6"/>
<path d="M830.5 105.5h10l-3.5 3.2h-10z" fill="#d6d6d6"/>
<path d="M830.5 109h8l-3.5 3.2h-8z" fill="#d6d6d6"/>
<path d="M834 110l3-3 5 5-3 3z" fill="#f5c46b"/>
<path d="M839 106l2-2 3 3-2 2z" fill="#eee"/>
<text x="848" y="113.3" font-size="12.01" fill="#f1f1f1" textLength="65" lengthAdjust="spacingAndGlyphs">Match Layer</text>
<path d="M958 50h12l5 5v19h-17z" fill="#6bb8ee"/>
<path d="M970 50v5h5" fill="#cfe6f7"/>
<rect x="944" y="60" width="20" height="14" fill="#777" stroke="#e0e0e0" stroke-width="1.2"/>
<rect x="942.5" y="72.5" width="3" height="3" fill="#e6e6e6"/>
<circle cx="964.5" cy="73.5" r="7" fill="#6e6e6e" stroke="#e0e0e0" stroke-width="1.2"/>
<text x="945" y="98.3" font-size="12.01" fill="#f1f1f1" textLength="29" lengthAdjust="spacingAndGlyphs">Insert</text>
<path d="M956.4 105.2L961.6 105.2L959 108.3Z" fill="#f1f1f1"/>
<rect x="984.5" y="58.5" width="9" height="7" fill="#666" stroke="#d8d8d8" stroke-width="1.1"/>
<circle cx="994" cy="65" r="2.8" fill="#666" stroke="#d8d8d8" stroke-width="1.1"/>
<rect x="983.3" y="64.3" width="2.2" height="2.2" fill="#e0e0e0"/>
<path d="M995 56L999 56" stroke="#f5c46b" stroke-width="1.2"/>
<path d="M995 56L997.83 58.83" stroke="#f5c46b" stroke-width="1.2"/>
<path d="M995 56L995 60" stroke="#f5c46b" stroke-width="1.2"/>
<path d="M995 56L992.17 58.83" stroke="#f5c46b" stroke-width="1.2"/>
<path d="M995 56L991 56" stroke="#f5c46b" stroke-width="1.2"/>
<path d="M995 56L992.17 53.17" stroke="#f5c46b" stroke-width="1.2"/>
<path d="M995 56L995 52" stroke="#f5c46b" stroke-width="1.2"/>
<path d="M995 56L997.83 53.17" stroke="#f5c46b" stroke-width="1.2"/>
<rect x="984.5" y="82.5" width="9" height="7" fill="#666" stroke="#d8d8d8" stroke-width="1.1"/>
<circle cx="994" cy="89" r="2.8" fill="#666" stroke="#d8d8d8" stroke-width="1.1"/>
<rect x="983.3" y="88.3" width="2.2" height="2.2" fill="#e0e0e0"/>
<path d="M992 84.5l5-6 2.2 1.8-5 6-3 1z" fill="#f5c46b"/>
<path d="M997 78.5l1.2-1.4 2.2 1.8-1.2 1.4z" fill="#b5651d"/>
<text x="1004" y="65.3" font-size="12.01" fill="#f1f1f1" textLength="34" lengthAdjust="spacingAndGlyphs">Create</text>
<text x="1004" y="89.3" font-size="12.01" fill="#f1f1f1" textLength="20" lengthAdjust="spacingAndGlyphs">Edit</text>
<path d="M983.5 103h9l5.5 6-6.5 7-8-8z" fill="#dce9f5"/>
<circle cx="986.5" cy="106" r="1" fill="#555"/>
<path d="M988 111l2.5 2.5 4-4.5" fill="none" stroke="#444" stroke-width="1.2"/>
<path d="M993 108l4.5-5.5 2.2 1.8-4.5 5.5-3 1z" fill="#f5c46b"/>
<path d="M997.5 102.5l1.2-1.4 2.2 1.8-1.2 1.4z" fill="#b5651d"/>
<text x="1004" y="113.3" font-size="12.01" fill="#f1f1f1" textLength="75" lengthAdjust="spacingAndGlyphs">Edit Attributes</text>
<path d="M1086.4 108.2L1091.6 108.2L1089 111.3Z" fill="#f1f1f1"/>
<rect x="1116" y="52.5" width="19.5" height="27" fill="#dadada" rx="1"/>
<rect x="1118.5" y="55" width="14" height="10" fill="#6bb8ee"/>
<path d="M1119 70h5m2 0h7M1119 74h8m2 0h4M1125 68.5v3M1128.5 72.5v3" fill="none" stroke="#555" stroke-width="1"/>
<path d="M1131 76l5-5 7.5 7.5-5 5z" fill="#f5c46b"/>
<path d="M1137.5 69.5l3-3 4.5 4.5-3 3z" fill="#f2f2f2"/>
<rect x="1141.5" y="63" width="2.5" height="5" fill="#f2f2f2" transform="rotate(40 1142.7 65.5)"/>
<text x="1114" y="99.3" font-size="12.01" fill="#f1f1f1" textLength="34" lengthAdjust="spacingAndGlyphs">Match</text>
<text x="1104" y="114.3" font-size="12.01" fill="#f1f1f1" textLength="53" lengthAdjust="spacingAndGlyphs">Properties</text>
<path d="M1171 60L1167 53.07A8 8 0 0 1 1175 53.07Z" fill="#e8cf45"/>
<path d="M1171 60L1175 53.07A8 8 0 0 1 1179 60Z" fill="#c9935a"/>
<path d="M1171 60L1179 60A8 8 0 0 1 1175 66.93Z" fill="#c24a3d"/>
<path d="M1171 60L1175 66.93A8 8 0 0 1 1167 66.93Z" fill="#7a45d6"/>
<path d="M1171 60L1167 66.93A8 8 0 0 1 1163 60Z" fill="#5a9fe0"/>
<path d="M1171 60L1163 60A8 8 0 0 1 1167 53.07Z" fill="#3dab4a"/>
<rect x="1163" y="76" width="16" height="1.4" fill="#dcdcdc"/>
<rect x="1163" y="79.5" width="16" height="2" fill="#dcdcdc"/>
<rect x="1163" y="83.5" width="16" height="2.8" fill="#dcdcdc"/>
<rect x="1163" y="88" width="16" height="3.6" fill="#dcdcdc"/>
<path d="M1163 101L1179 101" stroke="#dcdcdc" stroke-width="1" stroke-dasharray="1 1"/>
<path d="M1163 104.5L1179 104.5" stroke="#dcdcdc" stroke-width="1" stroke-dasharray="3 1"/>
<path d="M1163 108L1179 108" stroke="#dcdcdc" stroke-width="1" stroke-dasharray="2 1.5"/>
<path d="M1163 111.5L1179 111.5" stroke="#dcdcdc" stroke-width="1" stroke-dasharray="4 1"/>
<path d="M1163 115L1179 115" stroke="#dcdcdc" stroke-width="1" stroke-dasharray="5 1.2"/>
<rect x="1181.5" y="50.5" width="179" height="20.5" fill="url(#gCombo)" stroke="#2c2c2c" stroke-width="1" rx="1"/>
<rect x="1181.5" y="73.8" width="179" height="20.5" fill="url(#gCombo)" stroke="#2c2c2c" stroke-width="1" rx="1"/>
<rect x="1181.5" y="97.5" width="179" height="20.8" fill="url(#gCombo)" stroke="#2c2c2c" stroke-width="1" rx="1"/>
<rect x="1194" y="54" width="16" height="14.5" fill="#fff"/>
<text x="1220" y="65.3" font-size="12.01" fill="#f1f1f1" textLength="41" lengthAdjust="spacingAndGlyphs">ByLayer</text>
<path d="M1185 83.7L1249 83.7" stroke="#eee" stroke-width="1.1"/>
<text x="1251" y="88.3" font-size="12.01" fill="#f1f1f1" textLength="41" lengthAdjust="spacingAndGlyphs">ByLayer</text>
<path d="M1185 108L1249 108" stroke="#eee" stroke-width="1.1"/>
<text x="1251" y="111.8" font-size="12.01" fill="#f1f1f1" textLength="47" lengthAdjust="spacingAndGlyphs">BYLAYER</text>
<path d="M1351.6 59.4L1358.4 59.4L1355 63.1Z" fill="#f1f1f1"/>
<path d="M1351.6 82.4L1358.4 82.4L1355 86.1Z" fill="#f1f1f1"/>
<path d="M1351.6 106.4L1358.4 106.4L1355 110.1Z" fill="#f1f1f1"/>
<path d="M1374 56h-4v27h4M1386 60v-0M1387 83h4v-13" fill="none" stroke="#e6e6e6" stroke-width="1.5"/>
<rect x="1374" y="57.5" width="9" height="8" fill="#5eb7ee" rx="1"/>
<circle cx="1379" cy="74" r="4.5" fill="#888" stroke="#b5b5b5" stroke-width="1.5"/>
<path d="M1391 56.5L1398 56.5" stroke="#f5c46b" stroke-width="1.6"/>
<path d="M1391 56.5L1394.18 59.68" stroke="#f5c46b" stroke-width="1.6"/>
<path d="M1391 56.5L1391 63.5" stroke="#f5c46b" stroke-width="1.6"/>
<path d="M1391 56.5L1387.82 59.68" stroke="#f5c46b" stroke-width="1.6"/>
<path d="M1391 56.5L1384 56.5" stroke="#f5c46b" stroke-width="1.6"/>
<path d="M1391 56.5L1387.82 53.32" stroke="#f5c46b" stroke-width="1.6"/>
<path d="M1391 56.5L1391 49.5" stroke="#f5c46b" stroke-width="1.6"/>
<path d="M1391 56.5L1394.18 53.32" stroke="#f5c46b" stroke-width="1.6"/>
<circle cx="1391" cy="56.5" r="2.6" fill="#ffe2a0"/>
<text x="1369" y="99.3" font-size="12.01" fill="#f1f1f1" textLength="32" lengthAdjust="spacingAndGlyphs">Group</text>
<rect x="1412.5" y="55" width="4.5" height="4" fill="none" stroke="#5eb7ee" stroke-width="1"/>
<circle cx="1415" cy="64.5" r="2.3" fill="none" stroke="#c0c0c0" stroke-width="1"/>
<path d="M1419 53.5h2v15h-2" fill="none" stroke="#e0e0e0" stroke-width="1"/>
<rect x="1412.5" y="79" width="4.5" height="4" fill="none" stroke="#5eb7ee" stroke-width="1"/>
<circle cx="1415" cy="88.5" r="2.3" fill="none" stroke="#c0c0c0" stroke-width="1"/>
<path d="M1412 77.5h-2v15h2M1419 77.5h2v15h-2" fill="none" stroke="#e0e0e0" stroke-width="1"/>
<path d="M1420 58.5l5 5m0-5l-5 5" fill="none" stroke="#e0704a" stroke-width="1.4"/>
<path d="M1419 91l5-5 1.8 1.8-5 5-2.4.6z" fill="#f5c46b"/>
<rect x="1406.5" y="98.5" width="22" height="20.5" fill="#4f79b5" stroke="#7ea1d6" stroke-width="1"/>
<path d="M1413 102h-2v13h2" fill="none" stroke="#e8e8e8" stroke-width="1"/>
<rect x="1413.5" y="103.5" width="4" height="3.5" fill="none" stroke="#8fd080" stroke-width="1"/>
<circle cx="1415.5" cy="111.5" r="2" fill="none" stroke="#8fd080" stroke-width="1"/>
<path d="M1419.5 105v11l2.5-2.5 2 4 1.6-.8-2-4h3.5z" fill="#fff" stroke="#333" stroke-width="0.5"/>
<path d="M1456 58.5v9M1483 58.5v9M1456.5 63h26" fill="none" stroke="#e0e0e0" stroke-width="1.1"/>
<path d="M1456.5 63l3.5-2v4zM1482.5 63l-3.5-2v4z" fill="#e0e0e0"/>
<rect x="1455" y="70" width="29" height="6.5" fill="#f5c46b"/>
<path d="M1458 70L1458 72.8" stroke="#a07a30" stroke-width="0.8"/>
<path d="M1461 70L1461 72.8" stroke="#a07a30" stroke-width="0.8"/>
<path d="M1464 70L1464 72.8" stroke="#a07a30" stroke-width="0.8"/>
<path d="M1467 70L1467 72.8" stroke="#a07a30" stroke-width="0.8"/>
<path d="M1470 70L1470 72.8" stroke="#a07a30" stroke-width="0.8"/>
<path d="M1473 70L1473 72.8" stroke="#a07a30" stroke-width="0.8"/>
<path d="M1476 70L1476 72.8" stroke="#a07a30" stroke-width="0.8"/>
<path d="M1479 70L1479 72.8" stroke="#a07a30" stroke-width="0.8"/>
<path d="M1482 70L1482 72.8" stroke="#a07a30" stroke-width="0.8"/>
<text x="1446" y="99.3" font-size="12.01" fill="#f1f1f1" textLength="45" lengthAdjust="spacingAndGlyphs">Measure</text>
<path d="M1465.4 105.2L1470.6 105.2L1468 108.3Z" fill="#f1f1f1"/>
<path d="M1507.5 54v10l2.5-2.3 1.8 3.6 1.6-.8-1.8-3.6h3.2z" fill="#fff" stroke="#333" stroke-width="0.4"/>
<rect x="1513" y="58.5" width="9" height="9" fill="#e0e0e0"/>
<path d="M1514.5 61h6M1514.5 63h6M1514.5 65h6" fill="none" stroke="#4a7fc0" stroke-width="0.9"/>
<path d="M1515 53l3 2-2 1 3 2" fill="none" stroke="#f5c46b" stroke-width="1.2"/>
<rect x="1508" y="78.5" width="12" height="11" fill="#5c8a5c" stroke="#9ed09e" stroke-width="1" stroke-dasharray="2 1"/>
<rect x="1511" y="81" width="7" height="6" fill="none" stroke="#e0e0e0" stroke-width="1.2"/>
<path d="M1516.5 83v9l2-2 1.6 3.2 1.4-.7-1.6-3.2h2.8z" fill="#fff" stroke="#333" stroke-width="0.4"/>
<rect x="1509.5" y="101.5" width="11" height="14" fill="#d8d8d8" rx="0.8"/>
<rect x="1511" y="103" width="8" height="3" fill="#555"/>
<rect x="1511" y="107.5" width="2" height="1.6" fill="#555"/>
<rect x="1514" y="107.5" width="2" height="1.6" fill="#555"/>
<rect x="1517" y="107.5" width="2" height="1.6" fill="#555"/>
<rect x="1511" y="110.1" width="2" height="1.6" fill="#555"/>
<rect x="1514" y="110.1" width="2" height="1.6" fill="#555"/>
<rect x="1517" y="110.1" width="2" height="1.6" fill="#555"/>
<rect x="1511" y="112.7" width="2" height="1.6" fill="#555"/>
<rect x="1514" y="112.7" width="2" height="1.6" fill="#555"/>
<rect x="1517" y="112.7" width="2" height="1.6" fill="#555"/>
<rect x="1544" y="55.5" width="21" height="25" fill="#e9b56a" rx="1.5"/>
<rect x="1550" y="52.5" width="9" height="5" fill="#e4e4e4" rx="1"/>
<circle cx="1554.5" cy="52.8" r="1.3" fill="#e4e4e4"/>
<path d="M1552 63h11l6 6v15h-17z" fill="#e6e6e6"/>
<path d="M1563 63v6h6" fill="#bdbdbd"/>
<text x="1543" y="99.3" font-size="12.01" fill="#f1f1f1" textLength="28" lengthAdjust="spacingAndGlyphs">Paste</text>
<path d="M1554.4 105.2L1559.6 105.2L1557 108.3Z" fill="#f1f1f1"/>
<path d="M1588 54.5h9M1588 57.5h7M1588 60.5h5M1588 63.5h6" fill="none" stroke="#e0e0e0" stroke-width="1.3"/>
<path d="M1595 58l7 8M1602 58l-7 8" fill="none" stroke="#e6e6e6" stroke-width="1.2"/>
<circle cx="1595" cy="67" r="1.5" fill="none" stroke="#e6e6e6" stroke-width="1"/>
<circle cx="1602" cy="67" r="1.5" fill="none" stroke="#e6e6e6" stroke-width="1"/>
<path d="M1588.5 78h6l2.5 2.5v8h-8.5z" fill="#c9c9c9"/>
<path d="M1592.5 81.5h6l3 3v8.5h-9z" fill="#ededed"/>
<path d="M1625.5 56h14v11.5h17.5v12.5h-31.5z" fill="#e2e2e2"/>
<text x="1629" y="99.3" font-size="12.01" fill="#f1f1f1" textLength="25" lengthAdjust="spacingAndGlyphs">Base</text>
<path d="M1638.4 105.2L1643.6 105.2L1641 108.3Z" fill="#f1f1f1"/>
<rect x="0" y="144.5" width="1919" height="26" fill="#3a3a3a"/>
<path d="M0 146h10q9 0 7 10t-12 13.5h-5z" fill="#2e2e2e"/>
<path d="M11 169.6C18 169.6 17 147.3 25 147.3L136 147.3C144 147.3 145 169.6 152 169.6Z" fill="url(#gTab)"/>
<text x="32" y="162.8" font-size="12.01" fill="#c9c9c9" textLength="24" lengthAdjust="spacingAndGlyphs" xml:space="preserve">Start</text>
<path d="M137 169.6C144 169.6 143 147.3 151 147.3L263 147.3C271 147.3 272 169.6 279 169.6Z" fill="url(#gTab)"/>
<text x="155" y="162.8" font-size="12.01" fill="#c9c9c9" textLength="88" lengthAdjust="spacingAndGlyphs" xml:space="preserve">denah-furniture*</text>
<path d="M254.2 155.7l5.6 5.6m0-5.6l-5.6 5.6" fill="none" stroke="#2c2c2c" stroke-width="1.9"/>
<path d="M264 169.6C271 169.6 270 147.3 278 147.3L386 147.3C394 147.3 395 169.6 402 169.6Z" fill="url(#gTab)"/>
<text x="284" y="162.8" font-size="12.01" fill="#c9c9c9" textLength="48" lengthAdjust="spacingAndGlyphs" xml:space="preserve">den-pot*</text>
<path d="M377.2 155.7l5.6 5.6m0-5.6l-5.6 5.6" fill="none" stroke="#2c2c2c" stroke-width="1.9"/>
<path d="M387 169.6C394 169.6 393 147.3 401 147.3L522 147.3C530 147.3 531 169.6 538 169.6Z" fill="url(#gTab)"/>
<text x="407" y="162.8" font-size="12.01" fill="#c9c9c9" textLength="96" lengthAdjust="spacingAndGlyphs" xml:space="preserve">den-pot-srbguna*</text>
<path d="M513.2 155.7l5.6 5.6m0-5.6l-5.6 5.6" fill="none" stroke="#2c2c2c" stroke-width="1.9"/>
<path d="M523 169.6C530 169.6 529 147.3 537 147.3L704 147.3C712 147.3 713 169.6 720 169.6Z" fill="url(#gTab)"/>
<text x="543" y="162.8" font-size="12.01" fill="#c9c9c9" textLength="142" lengthAdjust="spacingAndGlyphs" xml:space="preserve">DETAIL  DOOR &amp; WINDOW</text>
<path d="M695.2 155.7l5.6 5.6m0-5.6l-5.6 5.6" fill="none" stroke="#2c2c2c" stroke-width="1.9"/>
<path d="M705 169.6C712 169.6 711 147.3 719 147.3L879 147.3C887 147.3 888 169.6 895 169.6Z" fill="url(#gTab)"/>
<text x="725" y="162.8" font-size="12.01" fill="#c9c9c9" textLength="135" lengthAdjust="spacingAndGlyphs" xml:space="preserve">DETAIL BAK CONTROL (1)</text>
<path d="M870.2 155.7l5.6 5.6m0-5.6l-5.6 5.6" fill="none" stroke="#2c2c2c" stroke-width="1.9"/>
<path d="M883 171C890 171 889 147.2 897 147.2L1036 147.2C1044 147.2 1045 171 1052 171Z" fill="url(#gTabA)"/>
<text x="900" y="162.8" font-size="12.01" fill="#f4f4f4" textLength="115" lengthAdjust="spacingAndGlyphs">DETAIL BAK KONTROL</text>
<path d="M1026.3 155.8l5.6 5.6m0-5.6l-5.6 5.6" fill="none" stroke="#4a4a4a" stroke-width="1.9"/>
<path d="M1052.5 151.5h12q10.5 0 10.5 11.5 0 2.6-3 2.6h-9q-8 0-10.5-14.1z" fill="#4e4e4e"/>
<path d="M1060.3 158.8h7.4M1064 155.1v7.4" fill="none" stroke="#d0d0d0" stroke-width="1.9"/>
<rect x="0" y="169.8" width="1919" height="3" fill="#5b5b5b"/>
<rect x="0" y="1002.5" width="1919" height="27.5" fill="#3a3a3a"/>
<path d="M0 1003L1919 1003" stroke="#4e4e4e" stroke-width="1"/>
<path d="M8 1003.5q5 0 7 9t9 8.5h38q5 0 7-8.5t7-9z" fill="url(#gModel)"/>
<text x="23.3" y="1016.1" font-size="12.29" fill="#fff" textLength="35" lengthAdjust="spacingAndGlyphs" font-weight="bold">Model</text>
<path d="M70 1003.5q5 0 7 9t9 8.5h38q6 0 8-8.5t7-9z" fill="#555"/>
<text x="81.3" y="1016.1" font-size="12.29" fill="#c4c8d0" textLength="41.2" lengthAdjust="spacingAndGlyphs">Layout1</text>
<path d="M144 1003.5h18q-1 4-2 9t-8 6h-14q4-2 5-8z" fill="#4f4f4f"/>
<path d="M146 1012h8M150 1008v8" fill="none" stroke="#d8d8d8" stroke-width="1.5"/>
<rect x="1358" y="1004.5" width="47" height="24.5" fill="#4d4d4d" stroke="#606060" stroke-width="1"/>
<rect x="1408" y="1004.5" width="64" height="24.5" fill="#4d4d4d" stroke="#606060" stroke-width="1"/>
<rect x="1474" y="1004.5" width="166" height="24.5" fill="#4d4d4d" stroke="#606060" stroke-width="1"/>
<rect x="1642" y="1004.5" width="105" height="24.5" fill="#4d4d4d" stroke="#606060" stroke-width="1"/>
<rect x="1749" y="1004.5" width="42" height="24.5" fill="#4d4d4d" stroke="#606060" stroke-width="1"/>
<rect x="1793" y="1004.5" width="21" height="24.5" fill="#4d4d4d" stroke="#606060" stroke-width="1"/>
<rect x="1817" y="1004.5" width="25" height="24.5" fill="#4d4d4d" stroke="#606060" stroke-width="1"/>
<rect x="1844" y="1004.5" width="23" height="24.5" fill="#4d4d4d" stroke="#606060" stroke-width="1"/>
<rect x="1869.5" y="1004.5" width="48.5" height="24.5" fill="#4d4d4d" stroke="#606060" stroke-width="1"/>
<text x="1361.5" y="1021.4" font-size="12.29" fill="#f2f2f2" textLength="40.5" lengthAdjust="spacingAndGlyphs">MODEL</text>
<path d="M1414 1011.5h12M1414 1016.5h12M1414 1021.5h12M1416.5 1009v15M1420.5 1009v15M1424.5 1009v15" fill="none" stroke="#e8e8e8" stroke-width="1"/>
<rect x="1438.5" y="1011" width="1.8" height="1.8" fill="#e8e8e8"/>
<rect x="1443.5" y="1011" width="1.8" height="1.8" fill="#e8e8e8"/>
<rect x="1448.5" y="1011" width="1.8" height="1.8" fill="#e8e8e8"/>
<rect x="1438.5" y="1016" width="1.8" height="1.8" fill="#e8e8e8"/>
<rect x="1443.5" y="1016" width="1.8" height="1.8" fill="#e8e8e8"/>
<rect x="1448.5" y="1016" width="1.8" height="1.8" fill="#e8e8e8"/>
<rect x="1438.5" y="1021" width="1.8" height="1.8" fill="#e8e8e8"/>
<rect x="1443.5" y="1021" width="1.8" height="1.8" fill="#e8e8e8"/>
<rect x="1448.5" y="1021" width="1.8" height="1.8" fill="#e8e8e8"/>
<path d="M1460.2 1015.6L1465.8 1015.6L1463 1018.9Z" fill="#f1f1f1"/>
<path d="M1479.5 1009v14h11M1479.5 1018h4.5v5" fill="none" stroke="#e8e8e8" stroke-width="1.1"/>
<rect x="1499" y="1006" width="22" height="22" fill="#5b90cf"/>
<circle cx="1509" cy="1018" r="5.5" fill="none" stroke="#fff" stroke-width="1.2"/>
<path d="M1509 1018h9M1509 1018l7-8" fill="none" stroke="#fff" stroke-width="1.1"/>
<path d="M1526.2 1015.6L1531.8 1015.6L1529 1018.9Z" fill="#f1f1f1"/>
<path d="M1548 1008v19" fill="none" stroke="#e8e8e8" stroke-width="1.1"/>
<path d="M1542 1009l13 16" fill="none" stroke="#e0704a" stroke-width="1.1"/>
<path d="M1548 1017l-6 7" fill="none" stroke="#6cc46c" stroke-width="1.1"/>
<rect x="1546.5" y="1015.5" width="3" height="3" fill="#e8e8e8"/>
<path d="M1565.7 1015.6L1571.3 1015.6L1568.5 1018.9Z" fill="#f1f1f1"/>
<rect x="1578" y="1006" width="21.5" height="22" fill="#5b90cf"/>
<path d="M1580 1024.5h17M1582 1024l13-13" fill="none" stroke="#fff" stroke-width="1.3"/>
<rect x="1586.5" y="1017.5" width="3.5" height="3.5" fill="#fff"/>
<rect x="1602" y="1006" width="22" height="22" fill="#5b90cf"/>
<rect x="1607.5" y="1012.5" width="12" height="12" fill="none" stroke="#fff" stroke-width="1.3"/>
<rect x="1605" y="1010" width="4.5" height="4.5" fill="#5b90cf" stroke="#fff" stroke-width="1.1"/>
<path d="M1629.2 1015.6L1634.8 1015.6L1632 1018.9Z" fill="#f1f1f1"/>
<rect x="1644" y="1006" width="22" height="22" fill="#5b90cf"/>
<path d="M1653.5 1009l5.5 15-5.5-4-5.5 4z" fill="#fff"/>
<circle cx="1661" cy="1011.5" r="2" fill="none" stroke="#fff" stroke-width="1"/>
<path d="M1677 1009l5.5 15-5.5-4-5.5 4z" fill="#cfcfcf"/>
<path d="M1683 1008l-3 4h2.5l-2 4" fill="none" stroke="#cfcfcf" stroke-width="1"/>
<path d="M1703 1009l5.5 15-5.5-4-5.5 4z" fill="#cfcfcf"/>
<text x="1720" y="1021.1" font-size="11.45" fill="#f2f2f2" textLength="13" lengthAdjust="spacingAndGlyphs">1:1</text>
<path d="M1737.9 1015.6L1743.5 1015.6L1740.7 1018.9Z" fill="#f1f1f1"/>
<circle cx="1762.5" cy="1017" r="4.6" fill="none" stroke="#e0e0e0" stroke-width="3.2"/>
<path d="M1768 1017L1770.5 1017" stroke="#e0e0e0" stroke-width="2.4"/>
<path d="M1766.39 1020.89L1768.16 1022.66" stroke="#e0e0e0" stroke-width="2.4"/>
<path d="M1762.5 1022.5L1762.5 1025" stroke="#e0e0e0" stroke-width="2.4"/>
<path d="M1758.61 1020.89L1756.84 1022.66" stroke="#e0e0e0" stroke-width="2.4"/>
<path d="M1757 1017L1754.5 1017" stroke="#e0e0e0" stroke-width="2.4"/>
<path d="M1758.61 1013.11L1756.84 1011.34" stroke="#e0e0e0" stroke-width="2.4"/>
<path d="M1762.5 1011.5L1762.5 1009" stroke="#e0e0e0" stroke-width="2.4"/>
<path d="M1766.39 1013.11L1768.16 1011.34" stroke="#e0e0e0" stroke-width="2.4"/>
<path d="M1779.2 1015.6L1784.8 1015.6L1782 1018.9Z" fill="#f1f1f1"/>
<path d="M1794.5 1017h16M1802.5 1009v16" fill="none" stroke="#f0f0f0" stroke-width="1.6"/>
<rect x="1822" y="1009" width="6" height="6" fill="none" stroke="#e4e4e4" stroke-width="1.1"/>
<circle cx="1836" cy="1015.5" r="3" fill="none" stroke="#e4e4e4" stroke-width="1.1"/>
<path d="M1826 1024.5l3.5-6 3.5 6z" fill="none" stroke="#e4e4e4" stroke-width="1.1"/>
<rect x="1849" y="1009" width="10" height="14" fill="#f2f2f2"/>
<rect x="1849" y="1013" width="7" height="4" fill="#4aa3df"/>
<rect x="1849" y="1018" width="8" height="4" fill="#e8c84a"/>
<path d="M1856 1021l2 2 4-4.5" fill="none" stroke="#2e9e3e" stroke-width="1.6"/>
<rect x="1873.5" y="1010.5" width="16" height="12" fill="none" stroke="#e4e4e4" stroke-width="1.1"/>
<path d="M1877 1019l9-5m-3.5-.5l3.5.5-1.3 3.2M1877 1019l3.5.5m-3.5-.5l1.3-3.2" fill="none" stroke="#e4e4e4" stroke-width="1"/>
<path d="M1898 1011L1914 1011" stroke="#f0f0f0" stroke-width="2.2"/>
<path d="M1898 1017L1914 1017" stroke="#f0f0f0" stroke-width="2.2"/>
<path d="M1898 1023L1914 1023" stroke="#f0f0f0" stroke-width="2.2"/>
</svg>
</body></html>
